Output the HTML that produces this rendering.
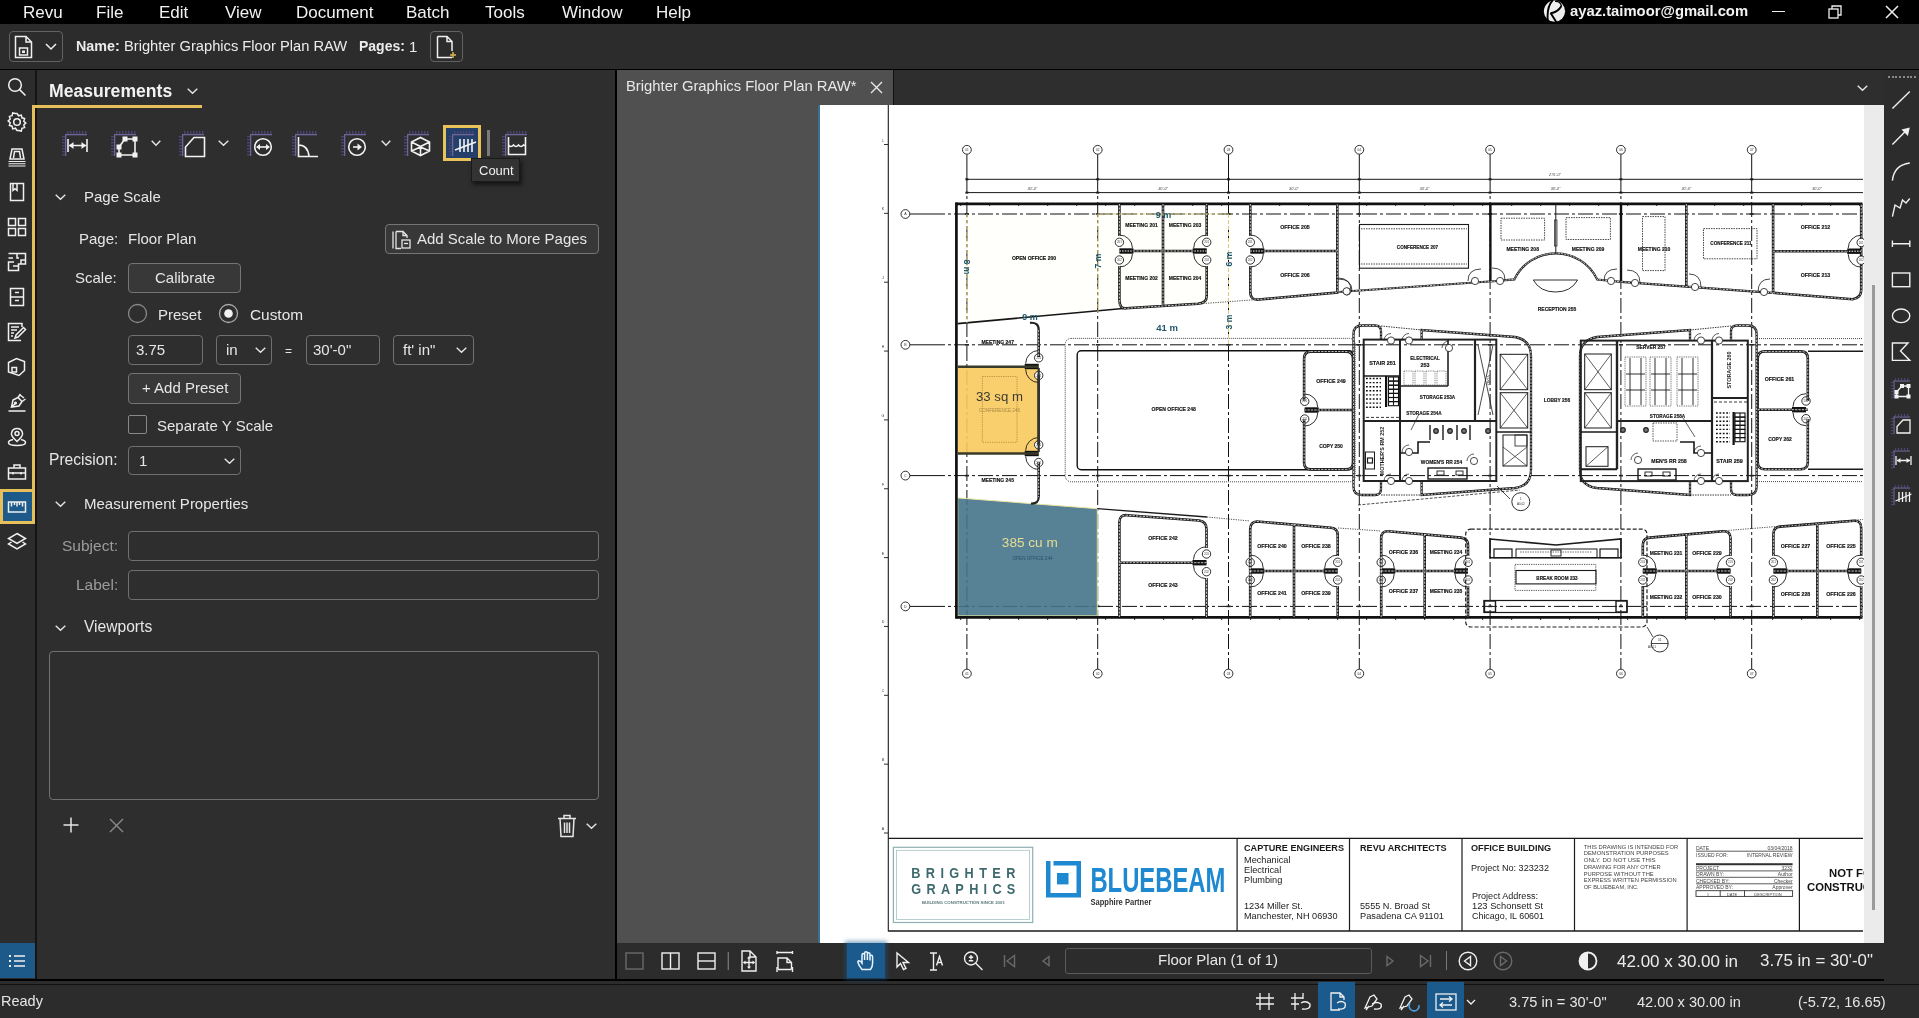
<!DOCTYPE html>
<html><head><meta charset="utf-8">
<style>
*{margin:0;padding:0;box-sizing:border-box}
html,body{width:1919px;height:1018px;overflow:hidden;-webkit-font-smoothing:antialiased;background:#2d2d2d;font-family:"Liberation Sans",sans-serif;color:#e8e8e8}
.a{position:absolute}
.t{position:absolute;white-space:nowrap;line-height:1;will-change:transform}
svg{position:absolute;overflow:visible}
.ic{fill:none;stroke:#f0f0f0;stroke-width:1.5}
.btn{position:absolute;border:1.2px solid #757575;border-radius:4px;background:#383838}
.inp{position:absolute;border:1.2px solid #707070;border-radius:4px;background:#2e2e2e}
</style></head><body>

<div class="a" style="left:0px;top:0px;width:1919px;height:24px;background:#000;"></div>
<div class="a" style="left:0px;top:24px;width:1919px;height:45px;background:#2c2c2c;"></div>
<div class="a" style="left:0px;top:68.8px;width:1919px;height:1.4px;background:#000;"></div>
<div class="a" style="left:0px;top:70px;width:35px;height:913px;background:#2c2c2c;"></div>
<div class="a" style="left:35px;top:70px;width:1.5px;height:913px;background:#141414;"></div>
<div class="a" style="left:36.5px;top:70px;width:578.5px;height:908px;background:#2e2e2e;"></div>
<div class="a" style="left:615px;top:70px;width:2px;height:913px;background:#000;"></div>
<div class="a" style="left:617px;top:70px;width:1267px;height:35px;background:#2e2e2e;"></div>
<div class="a" style="left:617px;top:70px;width:276px;height:35px;background:#505050;"></div>
<div class="a" style="left:893px;top:70px;width:1px;height:35px;background:#111;"></div>
<div class="a" style="left:617px;top:105px;width:1267px;height:838px;background:#505050;"></div>
<div class="a" style="left:818px;top:105px;width:2px;height:838px;background:#3b6f90;"></div>
<div class="a" style="left:820px;top:105px;width:1044px;height:838px;background:#fff;"></div>
<div class="a" style="left:1864px;top:105px;width:20px;height:838px;background:#ebebeb;"></div>
<div class="a" style="left:1884px;top:70px;width:35px;height:913px;background:#2c2c2c;"></div>
<div class="a" style="left:617px;top:943px;width:1267px;height:35.6px;background:#2c2c2c;"></div>
<div class="a" style="left:0px;top:978.6px;width:1884px;height:2.8px;background:#000;"></div>
<div class="a" style="left:0px;top:981.4px;width:1919px;height:2.4px;background:#2c2c2c;"></div>
<div class="a" style="left:0px;top:983.8px;width:1919px;height:1.4px;background:#111;"></div>
<div class="a" style="left:0px;top:985.2px;width:1919px;height:33px;background:#2c2c2c;"></div>
<div style="color:#f2f2f2;font-size:17px">
<div class="t" style="left:23px;top:4px">Revu</div>
<div class="t" style="left:96px;top:4px">File</div>
<div class="t" style="left:159px;top:4px">Edit</div>
<div class="t" style="left:225px;top:4px">View</div>
<div class="t" style="left:296px;top:4px">Document</div>
<div class="t" style="left:406px;top:4px">Batch</div>
<div class="t" style="left:485px;top:4px">Tools</div>
<div class="t" style="left:562px;top:4px">Window</div>
<div class="t" style="left:656px;top:4px">Help</div>
<div class="t" style="left:1570px;top:4px;font-weight:bold;font-size:14.8px">ayaz.taimoor@gmail.com</div></div>
<svg style="left:1538px;top:0" width="40" height="24"><circle cx="16.5" cy="11.2" r="10.6" fill="#eee"/><path d="M14.8 0 Q8.5 7 9.8 20" stroke="#000" stroke-width="1.9" fill="none"/><path d="M12.5 13.2 Q19.5 12.5 23.5 6" stroke="#000" stroke-width="1.9" fill="none"/><path d="M12.6 13 L18.6 22.5" stroke="#000" stroke-width="1.9"/><path d="M23.5 6 Q22 1 17 1.5" stroke="#000" stroke-width="1.2" fill="none"/></svg>
<div class="a" style="left:1772px;top:11px;width:13px;height:1.2px;background:#eee;"></div>
<svg style="left:1828px;top:5px" width="14" height="14"><rect x="1" y="4" width="9" height="9" fill="none" stroke="#eee" stroke-width="1.3"/><path d="M4 4V1H13V10H10" fill="none" stroke="#eee" stroke-width="1.3"/></svg>
<svg style="left:1885px;top:5px" width="14" height="14"><path d="M1 1L13 13M13 1L1 13" stroke="#eee" stroke-width="1.5"/></svg>
<div class="a" style="left:9px;top:31px;width:54px;height:31px;border:1.5px solid #626262;border-radius:4px"></div>
<svg style="left:14px;top:35px" width="20" height="24" viewBox="0 0 20 24"><path d="M1.5 1.5H12L17.5 7V22.5H1.5Z M12 1.5V7H17.5" class="ic" stroke-width="1.4"/><rect x="5.5" y="13" width="8" height="7" class="ic" stroke-width="1.3"/><rect x="8" y="15.5" width="3" height="2.5" fill="#f0f0f0"/></svg>
<svg style="left:45px;top:43px" width="12" height="8"><path d="M1 1L6 6L11 1" class="ic" stroke-width="1.4"/></svg>
<div class="t" style="left:76px;top:39px;font-size:14.3px;font-weight:bold;color:#ececec">Name:</div>
<div class="t" style="left:124px;top:39px;font-size:14.7px;color:#ececec">Brighter Graphics Floor Plan RAW</div>
<div class="t" style="left:359px;top:39px;font-size:14px;font-weight:bold;color:#ececec">Pages:</div>
<div class="t" style="left:409px;top:39px;font-size:15px;color:#ececec">1</div>
<div class="a" style="left:430px;top:31px;width:33px;height:31px;border:1.5px solid #626262;border-radius:4px"></div>
<svg style="left:436px;top:35px" width="22" height="24" viewBox="0 0 22 24"><path d="M1.5 1.5H11L16 6.5V16 M16 22.5H1.5V1.5 M11 1.5V6.5H16" class="ic" stroke-width="1.4"/><path d="M17 17V23M14 20H20" stroke="#d9b650" stroke-width="1.5"/></svg>
<svg style="left:7.0px;top:77.0px" width="20" height="20" viewBox="0 0 20 20" class="ic" stroke-width="1.3"><circle cx="8" cy="8" r="6.3"/><path d="M12.6 12.6L18.5 18.5"/></svg>
<svg style="left:7.0px;top:112.0px" width="20" height="20" viewBox="0 0 20 20" class="ic" stroke-width="1.3"><path d="M10 1.5l1.6 2.3 2.7-.7.6 2.7 2.7.8-.8 2.7 2 1.8-2 1.8.8 2.7-2.7.8-.6 2.7-2.7-.7L10 18.5l-1.6-2.3-2.7.7-.6-2.7-2.7-.8.8-2.7-2-1.8 2-1.8-.8-2.7 2.7-.8.6-2.7 2.7.7Z"/><circle cx="10" cy="10" r="3.3"/></svg>
<svg style="left:7.0px;top:147.0px" width="20" height="20" viewBox="0 0 20 20" class="ic" stroke-width="1.3"><path d="M3 12L5 2H15L17 12Z M6.5 11L7.5 4.5H12.5L13.5 11"/><path d="M1.5 14.5H18.5M1.5 16.8H18.5M1.5 19H18.5" stroke-width="1.1"/></svg>
<svg style="left:7.0px;top:182.0px" width="20" height="20" viewBox="0 0 20 20" class="ic" stroke-width="1.3"><path d="M3.5 1.5H16.5V18.5H3.5Z M6 1.5V8.5L8 6.8L10 8.5V1.5"/></svg>
<svg style="left:7.0px;top:217.0px" width="20" height="20" viewBox="0 0 20 20" class="ic" stroke-width="1.3"><rect x="1.5" y="1.5" width="7" height="7"/><rect x="11.5" y="1.5" width="7" height="7"/><rect x="1.5" y="11.5" width="7" height="7"/><rect x="11.5" y="11.5" width="7" height="7"/></svg>
<svg style="left:7.0px;top:252.0px" width="20" height="20" viewBox="0 0 20 20" class="ic" stroke-width="1.3"><path d="M1.5 1.5H18.5V12H11.5V18.5H1.5V10H7 M1.5 6H6 M10 1.5V6H12 M14 12V8H18.5 M6 14H11.5"/></svg>
<svg style="left:7.0px;top:287.0px" width="20" height="20" viewBox="0 0 20 20" class="ic" stroke-width="1.3"><rect x="3.5" y="1.5" width="13" height="17"/><path d="M3.5 10H16.5 M8 5.5H12 M8 13.5H12" /></svg>
<svg style="left:7.0px;top:322.0px" width="20" height="20" viewBox="0 0 20 20" class="ic" stroke-width="1.3"><path d="M14 18.5H1.5V1.5H15V5 M4 5H12 M4 8H10 M4 11H7 M4 14H6"/><path d="M8 16L9 13L16.5 5.5L18.5 7.5L11 15Z"/></svg>
<svg style="left:7.0px;top:357.0px" width="20" height="20" viewBox="0 0 20 20" class="ic" stroke-width="1.3"><path d="M1.5 5.5L9.5 1.5L17.5 4.5V13.5L12 18.5L1.5 15Z"/><rect x="5" y="10.5" width="4.5" height="4.5"/></svg>
<svg style="left:7.0px;top:392.0px" width="20" height="20" viewBox="0 0 20 20" class="ic" stroke-width="1.3"><path d="M1.5 19H18.5"/><path d="M4.5 15L6 8L11 5.5L15 9.5L12 14Z M4.5 15L9 11 M11 5.5L13.5 2 M15 9.5L18.5 7 M13 3L17 6"/><circle cx="8.5" cy="11" r="0.8" fill="#f0f0f0"/></svg>
<svg style="left:7.0px;top:427.0px" width="20" height="20" viewBox="0 0 20 20" class="ic" stroke-width="1.3"><path d="M10 14.5Q3.5 8.5 4.5 6Q5.5 1.5 10 1.5Q14.5 1.5 15.5 6Q16.5 8.5 10 14.5Z"/><circle cx="10" cy="6.5" r="2"/><path d="M6 12.5Q1.5 13.5 1.5 15.5Q1.5 18.5 10 18.5Q18.5 18.5 18.5 15.5Q18.5 13.5 14 12.5"/></svg>
<svg style="left:7.0px;top:462.0px" width="20" height="20" viewBox="0 0 20 20" class="ic" stroke-width="1.3"><rect x="1.5" y="6" width="17" height="11"/><path d="M7 6V3H13V6 M1.5 11H18.5"/><path d="M6 10V12.5M14 10V12.5"/></svg>
<div class="a" style="left:0;top:489px;width:35px;height:35px;background:#1d5a8a;border:3px solid #e6bf5a"></div>
<svg style="left:7.0px;top:497.0px" width="20" height="20" viewBox="0 0 20 20" class="ic" stroke-width="1.3"><rect x="1.5" y="5" width="17" height="10"/><path d="M4.5 5V9.5M7.5 5V8M10 5V9.5M12.5 5V8M15.5 5V9.5"/></svg>
<svg style="left:7.0px;top:532.0px" width="20" height="20" viewBox="0 0 20 20" class="ic" stroke-width="1.3"><path d="M10 1.5L18.5 6.5L10 11.5L1.5 6.5Z"/><path d="M4.5 10L1.5 12L10 17L18.5 12L15.5 10"/></svg>
<div class="a" style="left:32px;top:105px;width:3px;height:387px;background:#e6bf5a;"></div>
<div class="a" style="left:32px;top:105px;width:170px;height:3px;background:#e6bf5a;"></div>
<div class="a" style="left:0px;top:943px;width:35px;height:35px;background:#1d5a8a;"></div>
<svg style="left:7.0px;top:951.0px" width="20" height="20" viewBox="0 0 20 20" class="ic" stroke-width="1.3"><path d="M7 5H18M7 10H18M7 15H18" /><path d="M2 5H4M2 10H4M2 15H4" stroke-width="2"/></svg>
<div class="t" style="left:49px;top:82.7px;font-size:17.6px;color:#f2f2f2;font-weight:bold">Measurements</div>
<svg style="left:187px;top:88px" width="11" height="6"><path d="M0.7 0.7L5.5 5.3L10.3 0.7" fill="none" stroke="#e6e6e6" stroke-width="1.4"/></svg>
<div class="a" style="left:443px;top:125px;width:38px;height:36px;background:#24406a;border:3px solid #e8c35a"></div>
<svg style="left:62px;top:131px" width="25" height="25"><rect x="5" y="0" width="1.4" height="3" fill="#4a4470"/><rect x="8" y="0" width="1.4" height="3" fill="#4a4470"/><rect x="11" y="0" width="1.4" height="3" fill="#4a4470"/><rect x="14" y="0" width="1.4" height="3" fill="#4a4470"/><rect x="17" y="0" width="1.4" height="3" fill="#4a4470"/><rect x="20" y="0" width="1.4" height="3" fill="#4a4470"/><rect x="23" y="0" width="1.4" height="3" fill="#4a4470"/><rect x="0" y="5" width="3" height="1.4" fill="#4a4470"/><rect x="0" y="8" width="3" height="1.4" fill="#4a4470"/><rect x="0" y="11" width="3" height="1.4" fill="#4a4470"/><rect x="0" y="14" width="3" height="1.4" fill="#4a4470"/><rect x="0" y="17" width="3" height="1.4" fill="#4a4470"/><rect x="0" y="20" width="3" height="1.4" fill="#4a4470"/><rect x="0" y="23" width="3" height="1.4" fill="#4a4470"/><rect x="3" y="3" width="22" height="1.3" fill="#6c6496"/><rect x="3" y="3" width="1.3" height="22" fill="#6c6496"/></svg>
<svg style="left:111px;top:131px" width="25" height="25"><rect x="5" y="0" width="1.4" height="3" fill="#4a4470"/><rect x="8" y="0" width="1.4" height="3" fill="#4a4470"/><rect x="11" y="0" width="1.4" height="3" fill="#4a4470"/><rect x="14" y="0" width="1.4" height="3" fill="#4a4470"/><rect x="17" y="0" width="1.4" height="3" fill="#4a4470"/><rect x="20" y="0" width="1.4" height="3" fill="#4a4470"/><rect x="23" y="0" width="1.4" height="3" fill="#4a4470"/><rect x="0" y="5" width="3" height="1.4" fill="#4a4470"/><rect x="0" y="8" width="3" height="1.4" fill="#4a4470"/><rect x="0" y="11" width="3" height="1.4" fill="#4a4470"/><rect x="0" y="14" width="3" height="1.4" fill="#4a4470"/><rect x="0" y="17" width="3" height="1.4" fill="#4a4470"/><rect x="0" y="20" width="3" height="1.4" fill="#4a4470"/><rect x="0" y="23" width="3" height="1.4" fill="#4a4470"/><rect x="3" y="3" width="22" height="1.3" fill="#6c6496"/><rect x="3" y="3" width="1.3" height="22" fill="#6c6496"/></svg>
<svg style="left:179px;top:131px" width="25" height="25"><rect x="5" y="0" width="1.4" height="3" fill="#4a4470"/><rect x="8" y="0" width="1.4" height="3" fill="#4a4470"/><rect x="11" y="0" width="1.4" height="3" fill="#4a4470"/><rect x="14" y="0" width="1.4" height="3" fill="#4a4470"/><rect x="17" y="0" width="1.4" height="3" fill="#4a4470"/><rect x="20" y="0" width="1.4" height="3" fill="#4a4470"/><rect x="23" y="0" width="1.4" height="3" fill="#4a4470"/><rect x="0" y="5" width="3" height="1.4" fill="#4a4470"/><rect x="0" y="8" width="3" height="1.4" fill="#4a4470"/><rect x="0" y="11" width="3" height="1.4" fill="#4a4470"/><rect x="0" y="14" width="3" height="1.4" fill="#4a4470"/><rect x="0" y="17" width="3" height="1.4" fill="#4a4470"/><rect x="0" y="20" width="3" height="1.4" fill="#4a4470"/><rect x="0" y="23" width="3" height="1.4" fill="#4a4470"/><rect x="3" y="3" width="22" height="1.3" fill="#6c6496"/><rect x="3" y="3" width="1.3" height="22" fill="#6c6496"/></svg>
<svg style="left:247px;top:131px" width="25" height="25"><rect x="5" y="0" width="1.4" height="3" fill="#4a4470"/><rect x="8" y="0" width="1.4" height="3" fill="#4a4470"/><rect x="11" y="0" width="1.4" height="3" fill="#4a4470"/><rect x="14" y="0" width="1.4" height="3" fill="#4a4470"/><rect x="17" y="0" width="1.4" height="3" fill="#4a4470"/><rect x="20" y="0" width="1.4" height="3" fill="#4a4470"/><rect x="23" y="0" width="1.4" height="3" fill="#4a4470"/><rect x="0" y="5" width="3" height="1.4" fill="#4a4470"/><rect x="0" y="8" width="3" height="1.4" fill="#4a4470"/><rect x="0" y="11" width="3" height="1.4" fill="#4a4470"/><rect x="0" y="14" width="3" height="1.4" fill="#4a4470"/><rect x="0" y="17" width="3" height="1.4" fill="#4a4470"/><rect x="0" y="20" width="3" height="1.4" fill="#4a4470"/><rect x="0" y="23" width="3" height="1.4" fill="#4a4470"/><rect x="3" y="3" width="22" height="1.3" fill="#6c6496"/><rect x="3" y="3" width="1.3" height="22" fill="#6c6496"/></svg>
<svg style="left:292px;top:131px" width="25" height="25"><rect x="5" y="0" width="1.4" height="3" fill="#4a4470"/><rect x="8" y="0" width="1.4" height="3" fill="#4a4470"/><rect x="11" y="0" width="1.4" height="3" fill="#4a4470"/><rect x="14" y="0" width="1.4" height="3" fill="#4a4470"/><rect x="17" y="0" width="1.4" height="3" fill="#4a4470"/><rect x="20" y="0" width="1.4" height="3" fill="#4a4470"/><rect x="23" y="0" width="1.4" height="3" fill="#4a4470"/><rect x="0" y="5" width="3" height="1.4" fill="#4a4470"/><rect x="0" y="8" width="3" height="1.4" fill="#4a4470"/><rect x="0" y="11" width="3" height="1.4" fill="#4a4470"/><rect x="0" y="14" width="3" height="1.4" fill="#4a4470"/><rect x="0" y="17" width="3" height="1.4" fill="#4a4470"/><rect x="0" y="20" width="3" height="1.4" fill="#4a4470"/><rect x="0" y="23" width="3" height="1.4" fill="#4a4470"/><rect x="3" y="3" width="22" height="1.3" fill="#6c6496"/><rect x="3" y="3" width="1.3" height="22" fill="#6c6496"/></svg>
<svg style="left:341px;top:131px" width="25" height="25"><rect x="5" y="0" width="1.4" height="3" fill="#4a4470"/><rect x="8" y="0" width="1.4" height="3" fill="#4a4470"/><rect x="11" y="0" width="1.4" height="3" fill="#4a4470"/><rect x="14" y="0" width="1.4" height="3" fill="#4a4470"/><rect x="17" y="0" width="1.4" height="3" fill="#4a4470"/><rect x="20" y="0" width="1.4" height="3" fill="#4a4470"/><rect x="23" y="0" width="1.4" height="3" fill="#4a4470"/><rect x="0" y="5" width="3" height="1.4" fill="#4a4470"/><rect x="0" y="8" width="3" height="1.4" fill="#4a4470"/><rect x="0" y="11" width="3" height="1.4" fill="#4a4470"/><rect x="0" y="14" width="3" height="1.4" fill="#4a4470"/><rect x="0" y="17" width="3" height="1.4" fill="#4a4470"/><rect x="0" y="20" width="3" height="1.4" fill="#4a4470"/><rect x="0" y="23" width="3" height="1.4" fill="#4a4470"/><rect x="3" y="3" width="22" height="1.3" fill="#6c6496"/><rect x="3" y="3" width="1.3" height="22" fill="#6c6496"/></svg>
<svg style="left:404px;top:131px" width="25" height="25"><rect x="5" y="0" width="1.4" height="3" fill="#4a4470"/><rect x="8" y="0" width="1.4" height="3" fill="#4a4470"/><rect x="11" y="0" width="1.4" height="3" fill="#4a4470"/><rect x="14" y="0" width="1.4" height="3" fill="#4a4470"/><rect x="17" y="0" width="1.4" height="3" fill="#4a4470"/><rect x="20" y="0" width="1.4" height="3" fill="#4a4470"/><rect x="23" y="0" width="1.4" height="3" fill="#4a4470"/><rect x="0" y="5" width="3" height="1.4" fill="#4a4470"/><rect x="0" y="8" width="3" height="1.4" fill="#4a4470"/><rect x="0" y="11" width="3" height="1.4" fill="#4a4470"/><rect x="0" y="14" width="3" height="1.4" fill="#4a4470"/><rect x="0" y="17" width="3" height="1.4" fill="#4a4470"/><rect x="0" y="20" width="3" height="1.4" fill="#4a4470"/><rect x="0" y="23" width="3" height="1.4" fill="#4a4470"/><rect x="3" y="3" width="22" height="1.3" fill="#6c6496"/><rect x="3" y="3" width="1.3" height="22" fill="#6c6496"/></svg>
<svg style="left:449px;top:131px" width="25" height="25"><rect x="5" y="0" width="1.4" height="3" fill="#4a4470"/><rect x="8" y="0" width="1.4" height="3" fill="#4a4470"/><rect x="11" y="0" width="1.4" height="3" fill="#4a4470"/><rect x="14" y="0" width="1.4" height="3" fill="#4a4470"/><rect x="17" y="0" width="1.4" height="3" fill="#4a4470"/><rect x="20" y="0" width="1.4" height="3" fill="#4a4470"/><rect x="23" y="0" width="1.4" height="3" fill="#4a4470"/><rect x="0" y="5" width="3" height="1.4" fill="#4a4470"/><rect x="0" y="8" width="3" height="1.4" fill="#4a4470"/><rect x="0" y="11" width="3" height="1.4" fill="#4a4470"/><rect x="0" y="14" width="3" height="1.4" fill="#4a4470"/><rect x="0" y="17" width="3" height="1.4" fill="#4a4470"/><rect x="0" y="20" width="3" height="1.4" fill="#4a4470"/><rect x="0" y="23" width="3" height="1.4" fill="#4a4470"/><rect x="3" y="3" width="22" height="1.3" fill="#6c6496"/><rect x="3" y="3" width="1.3" height="22" fill="#6c6496"/></svg>
<svg style="left:502px;top:131px" width="25" height="25"><rect x="5" y="0" width="1.4" height="3" fill="#4a4470"/><rect x="8" y="0" width="1.4" height="3" fill="#4a4470"/><rect x="11" y="0" width="1.4" height="3" fill="#4a4470"/><rect x="14" y="0" width="1.4" height="3" fill="#4a4470"/><rect x="17" y="0" width="1.4" height="3" fill="#4a4470"/><rect x="20" y="0" width="1.4" height="3" fill="#4a4470"/><rect x="23" y="0" width="1.4" height="3" fill="#4a4470"/><rect x="0" y="5" width="3" height="1.4" fill="#4a4470"/><rect x="0" y="8" width="3" height="1.4" fill="#4a4470"/><rect x="0" y="11" width="3" height="1.4" fill="#4a4470"/><rect x="0" y="14" width="3" height="1.4" fill="#4a4470"/><rect x="0" y="17" width="3" height="1.4" fill="#4a4470"/><rect x="0" y="20" width="3" height="1.4" fill="#4a4470"/><rect x="0" y="23" width="3" height="1.4" fill="#4a4470"/><rect x="3" y="3" width="22" height="1.3" fill="#6c6496"/><rect x="3" y="3" width="1.3" height="22" fill="#6c6496"/></svg>
<svg style="left:66px;top:138px" width="24" height="16"><path d="M2 1V14 M21 1V14 M3 7.5H20" fill="none" stroke="#f2f2f2" stroke-width="1.6"/><path d="M3 7.5L7.5 4V11Z M20 7.5L15.5 4V11Z" fill="#f2f2f2"/></svg>
<svg style="left:115px;top:135px" width="24" height="24"><path d="M4 12L10 4H20V20H4Z" fill="none" stroke="#f2f2f2" stroke-width="1.6" stroke-width="1.4"/><rect x="1.5" y="9.5" width="5" height="5" fill="#f2f2f2"/><rect x="7.5" y="1.5" width="5" height="5" fill="#f2f2f2"/><rect x="17.5" y="1.5" width="5" height="5" fill="#f2f2f2"/><rect x="17.5" y="17.5" width="5" height="5" fill="#f2f2f2"/><rect x="1.5" y="17.5" width="5" height="5" fill="#f2f2f2"/></svg>
<svg style="left:151px;top:140px" width="10" height="6"><path d="M0.7 0.7L5.0 5.3L9.3 0.7" fill="none" stroke="#e6e6e6" stroke-width="1.4"/></svg>
<svg style="left:184px;top:136px" width="22" height="22"><path d="M1.5 20.5V11L10 1.5H20.5V20.5Z" fill="none" stroke="#f2f2f2" stroke-width="1.6"/></svg>
<svg style="left:218px;top:140px" width="11" height="6"><path d="M0.7 0.7L5.5 5.3L10.3 0.7" fill="none" stroke="#e6e6e6" stroke-width="1.4"/></svg>
<svg style="left:253px;top:137px" width="20" height="20"><circle cx="10" cy="10" r="8.3" fill="none" stroke="#f2f2f2" stroke-width="1.6"/><path d="M4.5 10H15.5" fill="none" stroke="#f2f2f2" stroke-width="1.6"/><path d="M3 10L7 7V13Z M17 10L13 7V13Z" fill="#f2f2f2"/></svg>
<svg style="left:297px;top:136px" width="22" height="22"><path d="M1.5 1V20.5H21 M1.5 9Q11 9 12 20.5" fill="none" stroke="#f2f2f2" stroke-width="1.6"/></svg>
<svg style="left:347px;top:137px" width="20" height="20"><circle cx="10" cy="10" r="8.3" fill="none" stroke="#f2f2f2" stroke-width="1.6"/><path d="M6 10H12" fill="none" stroke="#f2f2f2" stroke-width="1.6" stroke-width="2"/><path d="M15 10L10.5 6.5V13.5Z" fill="#f2f2f2"/></svg>
<svg style="left:381px;top:140px" width="10" height="6"><path d="M0.7 0.7L5.0 5.3L9.3 0.7" fill="none" stroke="#e6e6e6" stroke-width="1.4"/></svg>
<svg style="left:410px;top:136px" width="21" height="21"><path d="M10.5 1.5L19.5 6V15L10.5 19.5L1.5 15V6Z M1.5 6L10.5 10.5L19.5 6 M10.5 10.5V19.5 M1.5 15L10.5 11 M19.5 15L10.5 11" fill="none" stroke="#f2f2f2" stroke-width="1.6" stroke-width="1.3"/></svg>
<svg style="left:454px;top:138px" width="24" height="16"><path d="M6 1V14 M10 1V14 M14 1V14 M18 1V14" fill="none" stroke="#f2f2f2" stroke-width="1.6" stroke-width="1.5"/><path d="M1 12L22 4" fill="none" stroke="#f2f2f2" stroke-width="1.6" stroke-width="1.5"/></svg>
<div class="a" style="left:487px;top:130px;width:2.5px;height:26px;background:#7a7a7a;"></div>
<svg style="left:507px;top:137px" width="20" height="19"><path d="M1.5 0V17.5H18.5V0 M1.5 8Q4 11 6.5 8Q9 11 11.5 8Q14 11 16.5 8Q17.5 9 18.5 8" fill="none" stroke="#f2f2f2" stroke-width="1.6" stroke-width="1.5"/></svg>
<div class="a" style="left:471px;top:158px;width:49px;height:24px;background:#333;border:1px solid #1a1a1a;box-shadow:2px 3px 4px rgba(0,0,0,.55)"></div>
<div class="t" style="left:479px;top:164.3px;font-size:13px;color:#f0f0f0;">Count</div>
<svg style="left:55px;top:194px" width="11" height="6"><path d="M0.7 0.7L5.5 5.3L10.3 0.7" fill="none" stroke="#e6e6e6" stroke-width="1.4"/></svg>
<div class="t" style="left:84px;top:189.1px;font-size:15px;color:#e6e6e6;">Page Scale</div>
<div class="t" style="left:79px;top:231.1px;font-size:15px;color:#e6e6e6;">Page:</div>
<div class="t" style="left:128px;top:231.1px;font-size:15px;color:#e6e6e6;">Floor Plan</div>
<div class="btn" style="left:385px;top:224px;width:214px;height:30px;"></div>
<svg style="left:392px;top:230px" width="20" height="20"><path d="M1 1.5V18.5 M4 1.5H11L15 5.5V8 M4 1.5V18.5H9 M11 1.5V5.5H15" fill="none" stroke="#e6e6e6" stroke-width="1.3"/><rect x="10" y="10" width="8" height="8" fill="none" stroke="#e6e6e6" stroke-width="1.3"/><path d="M12 13.5H16" stroke="#e6e6e6" stroke-width="1.3"/></svg>
<div class="t" style="left:417px;top:231.1px;font-size:15px;color:#e6e6e6;">Add Scale to More Pages</div>
<div class="t" style="left:75px;top:270.1px;font-size:15px;color:#e6e6e6;">Scale:</div>
<div class="btn" style="left:128px;top:263px;width:113px;height:30px;"></div>
<div class="t" style="left:155px;top:270.1px;font-size:15px;color:#e6e6e6;">Calibrate</div>
<svg style="left:127px;top:303px" width="22" height="22"><circle cx="10.5" cy="10.5" r="9" fill="none" stroke="#888" stroke-width="1.3"/></svg>
<div class="t" style="left:158px;top:307.1px;font-size:15px;color:#e6e6e6;">Preset</div>
<svg style="left:218px;top:303px" width="22" height="22"><circle cx="10.5" cy="10.5" r="9" fill="none" stroke="#aaa" stroke-width="1.3"/><circle cx="10.5" cy="10.5" r="4.3" fill="#f2f2f2"/></svg>
<div class="t" style="left:250px;top:307.0px;font-size:15.4px;color:#e6e6e6;">Custom</div>
<div class="inp" style="left:128px;top:335px;width:75px;height:30px;"></div>
<div class="t" style="left:136px;top:342.1px;font-size:15px;color:#e6e6e6;">3.75</div>
<div class="inp" style="left:216px;top:335px;width:56px;height:30px;"></div>
<div class="t" style="left:226px;top:342.1px;font-size:15px;color:#e6e6e6;">in</div>
<svg style="left:255px;top:347px" width="11" height="6"><path d="M0.7 0.7L5.5 5.3L10.3 0.7" fill="none" stroke="#e6e6e6" stroke-width="1.4"/></svg>
<div class="t" style="left:285px;top:345.4px;font-size:12px;color:#e6e6e6;">=</div>
<div class="inp" style="left:306px;top:335px;width:74px;height:30px;"></div>
<div class="t" style="left:313px;top:342.1px;font-size:15px;color:#e6e6e6;">30'-0"</div>
<div class="inp" style="left:393px;top:335px;width:81px;height:30px;"></div>
<div class="t" style="left:403px;top:342.1px;font-size:15px;color:#e6e6e6;">ft' in"</div>
<svg style="left:456px;top:347px" width="11" height="6"><path d="M0.7 0.7L5.5 5.3L10.3 0.7" fill="none" stroke="#e6e6e6" stroke-width="1.4"/></svg>
<div class="btn" style="left:128px;top:373px;width:113px;height:31px;"></div>
<div class="t" style="left:142px;top:380.1px;font-size:15px;color:#e6e6e6;">+ Add Preset</div>
<div class="a" style="left:128px;top:415px;width:19px;height:19px;border:1.3px solid #888;border-radius:2px"></div>
<div class="t" style="left:157px;top:418.1px;font-size:15px;color:#e6e6e6;">Separate Y Scale</div>
<div class="t" style="left:49px;top:452.0px;font-size:15.6px;color:#e6e6e6;">Precision:</div>
<div class="inp" style="left:128px;top:446px;width:113px;height:29px;"></div>
<div class="t" style="left:139px;top:453.1px;font-size:15px;color:#e6e6e6;">1</div>
<svg style="left:224px;top:458px" width="11" height="6"><path d="M0.7 0.7L5.5 5.3L10.3 0.7" fill="none" stroke="#e6e6e6" stroke-width="1.4"/></svg>
<svg style="left:55px;top:501px" width="11" height="6"><path d="M0.7 0.7L5.5 5.3L10.3 0.7" fill="none" stroke="#e6e6e6" stroke-width="1.4"/></svg>
<div class="t" style="left:84px;top:496.1px;font-size:15px;color:#e6e6e6;">Measurement Properties</div>
<div class="t" style="left:62px;top:538.0px;font-size:15.5px;color:#9c9c9c;">Subject:</div>
<div class="inp" style="left:128px;top:531px;width:471px;height:30px;"></div>
<div class="t" style="left:76px;top:577.0px;font-size:15.5px;color:#9c9c9c;">Label:</div>
<div class="inp" style="left:128px;top:570px;width:471px;height:30px;"></div>
<svg style="left:55px;top:625px" width="11" height="6"><path d="M0.7 0.7L5.5 5.3L10.3 0.7" fill="none" stroke="#e6e6e6" stroke-width="1.4"/></svg>
<div class="t" style="left:84px;top:619.0px;font-size:15.6px;color:#e6e6e6;">Viewports</div>
<div class="inp" style="left:49px;top:651px;width:550px;height:149px;"></div>
<svg style="left:63px;top:817px" width="16" height="16"><path d="M8 0.5V15.5M0.5 8H15.5" stroke="#e6e6e6" stroke-width="1.5"/></svg>
<svg style="left:109px;top:818px" width="15" height="15"><path d="M1 1L14 14M14 1L1 14" stroke="#8a8a8a" stroke-width="1.4"/></svg>
<svg style="left:557px;top:814px" width="20" height="24"><path d="M1 4.5H19 M7 4.5V1.5H13V4.5 M3 4.5L4 22.5H16L17 4.5 M7.5 8.5V19 M10 8.5V19 M12.5 8.5V19" fill="none" stroke="#e6e6e6" stroke-width="1.5"/></svg>
<svg style="left:586px;top:823px" width="11" height="6"><path d="M0.7 0.7L5.5 5.3L10.3 0.7" fill="none" stroke="#e6e6e6" stroke-width="1.4"/></svg>
<div class="t" style="left:626px;top:79.1px;font-size:14.8px;color:#e8e8e8;">Brighter Graphics Floor Plan RAW*</div>
<svg style="left:870px;top:81px" width="13" height="13"><path d="M1 1L12 12M12 1L1 12" stroke="#e8e8e8" stroke-width="1.4"/></svg>
<svg style="left:1857px;top:85px" width="11" height="6"><path d="M0.7 0.7L5.5 5.3L10.3 0.7" fill="none" stroke="#e6e6e6" stroke-width="1.4"/></svg>
<svg style="left:0;top:0" width="1919" height="1018"><defs><clipPath id="pg"><rect x="820" y="105" width="1044" height="837"/></clipPath></defs><g clip-path="url(#pg)" font-family="Liberation Sans, sans-serif">
<line x1="888.3" y1="105" x2="888.3" y2="931.5" stroke="#1a1a1a" stroke-width="1.1" stroke-linecap="butt"/>
<line x1="884" y1="144.5" x2="888.3" y2="144.5" stroke="#1a1a1a" stroke-width="0.9" stroke-linecap="butt"/>
<text x="883" y="141.5" font-size="3.6" fill="#333" text-anchor="middle" font-weight="normal" >L</text>
<line x1="884" y1="213.35" x2="888.3" y2="213.35" stroke="#1a1a1a" stroke-width="0.9" stroke-linecap="butt"/>
<text x="883" y="210.35" font-size="3.6" fill="#333" text-anchor="middle" font-weight="normal" >K</text>
<line x1="884" y1="282.2" x2="888.3" y2="282.2" stroke="#1a1a1a" stroke-width="0.9" stroke-linecap="butt"/>
<text x="883" y="279.2" font-size="3.6" fill="#333" text-anchor="middle" font-weight="normal" >J</text>
<line x1="884" y1="351.04999999999995" x2="888.3" y2="351.04999999999995" stroke="#1a1a1a" stroke-width="0.9" stroke-linecap="butt"/>
<text x="883" y="348.04999999999995" font-size="3.6" fill="#333" text-anchor="middle" font-weight="normal" >H</text>
<line x1="884" y1="419.9" x2="888.3" y2="419.9" stroke="#1a1a1a" stroke-width="0.9" stroke-linecap="butt"/>
<text x="883" y="416.9" font-size="3.6" fill="#333" text-anchor="middle" font-weight="normal" >G</text>
<line x1="884" y1="488.75" x2="888.3" y2="488.75" stroke="#1a1a1a" stroke-width="0.9" stroke-linecap="butt"/>
<text x="883" y="485.75" font-size="3.6" fill="#333" text-anchor="middle" font-weight="normal" >F</text>
<line x1="884" y1="557.5999999999999" x2="888.3" y2="557.5999999999999" stroke="#1a1a1a" stroke-width="0.9" stroke-linecap="butt"/>
<text x="883" y="554.5999999999999" font-size="3.6" fill="#333" text-anchor="middle" font-weight="normal" >E</text>
<line x1="884" y1="626.4499999999999" x2="888.3" y2="626.4499999999999" stroke="#1a1a1a" stroke-width="0.9" stroke-linecap="butt"/>
<text x="883" y="623.4499999999999" font-size="3.6" fill="#333" text-anchor="middle" font-weight="normal" >D</text>
<line x1="884" y1="695.3" x2="888.3" y2="695.3" stroke="#1a1a1a" stroke-width="0.9" stroke-linecap="butt"/>
<text x="883" y="692.3" font-size="3.6" fill="#333" text-anchor="middle" font-weight="normal" >C</text>
<line x1="884" y1="764.15" x2="888.3" y2="764.15" stroke="#1a1a1a" stroke-width="0.9" stroke-linecap="butt"/>
<text x="883" y="761.15" font-size="3.6" fill="#333" text-anchor="middle" font-weight="normal" >B</text>
<line x1="884" y1="833.0" x2="888.3" y2="833.0" stroke="#1a1a1a" stroke-width="0.9" stroke-linecap="butt"/>
<text x="883" y="830.0" font-size="3.6" fill="#333" text-anchor="middle" font-weight="normal" >A</text>
<path d="M966.9 214 L1228.5 214 L1228.5 306 L1201 303.7 L1123 308.5 L966.9 323" stroke="#1a1a1a" stroke-width="0" fill="#fffffb" />
<line x1="966.9" y1="154.2" x2="966.9" y2="178" stroke="#111" stroke-width="1.0" stroke-linecap="butt"/>
<line x1="966.9" y1="178" x2="966.9" y2="669.2" stroke="#111" stroke-width="1.0" stroke-dasharray="15 3 3 3" stroke-linecap="butt"/>
<circle cx="966.9" cy="149.8" r="4.4" stroke="#1a1a1a" stroke-width="0.9" fill="#fff"/>
<circle cx="966.9" cy="673.6" r="4.4" stroke="#1a1a1a" stroke-width="0.9" fill="#fff"/>
<line x1="1097.7" y1="154.2" x2="1097.7" y2="178" stroke="#111" stroke-width="1.0" stroke-linecap="butt"/>
<line x1="1097.7" y1="178" x2="1097.7" y2="669.2" stroke="#111" stroke-width="1.0" stroke-dasharray="15 3 3 3" stroke-linecap="butt"/>
<circle cx="1097.7" cy="149.8" r="4.4" stroke="#1a1a1a" stroke-width="0.9" fill="#fff"/>
<circle cx="1097.7" cy="673.6" r="4.4" stroke="#1a1a1a" stroke-width="0.9" fill="#fff"/>
<line x1="1228.5" y1="154.2" x2="1228.5" y2="178" stroke="#111" stroke-width="1.0" stroke-linecap="butt"/>
<line x1="1228.5" y1="178" x2="1228.5" y2="669.2" stroke="#111" stroke-width="1.0" stroke-dasharray="15 3 3 3" stroke-linecap="butt"/>
<circle cx="1228.5" cy="149.8" r="4.4" stroke="#1a1a1a" stroke-width="0.9" fill="#fff"/>
<circle cx="1228.5" cy="673.6" r="4.4" stroke="#1a1a1a" stroke-width="0.9" fill="#fff"/>
<line x1="1359.3" y1="154.2" x2="1359.3" y2="178" stroke="#111" stroke-width="1.0" stroke-linecap="butt"/>
<line x1="1359.3" y1="178" x2="1359.3" y2="669.2" stroke="#111" stroke-width="1.0" stroke-dasharray="15 3 3 3" stroke-linecap="butt"/>
<circle cx="1359.3" cy="149.8" r="4.4" stroke="#1a1a1a" stroke-width="0.9" fill="#fff"/>
<circle cx="1359.3" cy="673.6" r="4.4" stroke="#1a1a1a" stroke-width="0.9" fill="#fff"/>
<line x1="1490.1" y1="154.2" x2="1490.1" y2="178" stroke="#111" stroke-width="1.0" stroke-linecap="butt"/>
<line x1="1490.1" y1="178" x2="1490.1" y2="669.2" stroke="#111" stroke-width="1.0" stroke-dasharray="15 3 3 3" stroke-linecap="butt"/>
<circle cx="1490.1" cy="149.8" r="4.4" stroke="#1a1a1a" stroke-width="0.9" fill="#fff"/>
<circle cx="1490.1" cy="673.6" r="4.4" stroke="#1a1a1a" stroke-width="0.9" fill="#fff"/>
<line x1="1620.9" y1="154.2" x2="1620.9" y2="178" stroke="#111" stroke-width="1.0" stroke-linecap="butt"/>
<line x1="1620.9" y1="178" x2="1620.9" y2="669.2" stroke="#111" stroke-width="1.0" stroke-dasharray="15 3 3 3" stroke-linecap="butt"/>
<circle cx="1620.9" cy="149.8" r="4.4" stroke="#1a1a1a" stroke-width="0.9" fill="#fff"/>
<circle cx="1620.9" cy="673.6" r="4.4" stroke="#1a1a1a" stroke-width="0.9" fill="#fff"/>
<line x1="1751.7" y1="154.2" x2="1751.7" y2="178" stroke="#111" stroke-width="1.0" stroke-linecap="butt"/>
<line x1="1751.7" y1="178" x2="1751.7" y2="669.2" stroke="#111" stroke-width="1.0" stroke-dasharray="15 3 3 3" stroke-linecap="butt"/>
<circle cx="1751.7" cy="149.8" r="4.4" stroke="#1a1a1a" stroke-width="0.9" fill="#fff"/>
<circle cx="1751.7" cy="673.6" r="4.4" stroke="#1a1a1a" stroke-width="0.9" fill="#fff"/>
<line x1="909.8" y1="214.0" x2="930" y2="214.0" stroke="#111" stroke-width="1.0" stroke-linecap="butt"/>
<line x1="930" y1="214.0" x2="1863" y2="214.0" stroke="#111" stroke-width="1.0" stroke-dasharray="15 3 3 3" stroke-linecap="butt"/>
<circle cx="905.4" cy="214.0" r="4.4" stroke="#1a1a1a" stroke-width="0.9" fill="#fff"/>
<line x1="909.8" y1="344.8" x2="930" y2="344.8" stroke="#111" stroke-width="1.0" stroke-linecap="butt"/>
<line x1="930" y1="344.8" x2="1863" y2="344.8" stroke="#111" stroke-width="1.0" stroke-dasharray="15 3 3 3" stroke-linecap="butt"/>
<circle cx="905.4" cy="344.8" r="4.4" stroke="#1a1a1a" stroke-width="0.9" fill="#fff"/>
<line x1="909.8" y1="475.6" x2="930" y2="475.6" stroke="#111" stroke-width="1.0" stroke-linecap="butt"/>
<line x1="930" y1="475.6" x2="1863" y2="475.6" stroke="#111" stroke-width="1.0" stroke-dasharray="15 3 3 3" stroke-linecap="butt"/>
<circle cx="905.4" cy="475.6" r="4.4" stroke="#1a1a1a" stroke-width="0.9" fill="#fff"/>
<line x1="909.8" y1="606.4000000000001" x2="930" y2="606.4000000000001" stroke="#111" stroke-width="1.0" stroke-linecap="butt"/>
<line x1="930" y1="606.4000000000001" x2="1863" y2="606.4000000000001" stroke="#111" stroke-width="1.0" stroke-dasharray="15 3 3 3" stroke-linecap="butt"/>
<circle cx="905.4" cy="606.4000000000001" r="4.4" stroke="#1a1a1a" stroke-width="0.9" fill="#fff"/>
<text x="966.9" y="151.2" font-size="3.2" fill="#333" text-anchor="middle" font-weight="normal" >01</text>
<text x="966.9" y="675.0" font-size="3.2" fill="#333" text-anchor="middle" font-weight="normal" >01</text>
<text x="1097.7" y="151.2" font-size="3.2" fill="#333" text-anchor="middle" font-weight="normal" >02</text>
<text x="1097.7" y="675.0" font-size="3.2" fill="#333" text-anchor="middle" font-weight="normal" >02</text>
<text x="1228.5" y="151.2" font-size="3.2" fill="#333" text-anchor="middle" font-weight="normal" >03</text>
<text x="1228.5" y="675.0" font-size="3.2" fill="#333" text-anchor="middle" font-weight="normal" >03</text>
<text x="1359.3" y="151.2" font-size="3.2" fill="#333" text-anchor="middle" font-weight="normal" >04</text>
<text x="1359.3" y="675.0" font-size="3.2" fill="#333" text-anchor="middle" font-weight="normal" >04</text>
<text x="1490.1" y="151.2" font-size="3.2" fill="#333" text-anchor="middle" font-weight="normal" >05</text>
<text x="1490.1" y="675.0" font-size="3.2" fill="#333" text-anchor="middle" font-weight="normal" >05</text>
<text x="1620.9" y="151.2" font-size="3.2" fill="#333" text-anchor="middle" font-weight="normal" >06</text>
<text x="1620.9" y="675.0" font-size="3.2" fill="#333" text-anchor="middle" font-weight="normal" >06</text>
<text x="1751.7" y="151.2" font-size="3.2" fill="#333" text-anchor="middle" font-weight="normal" >07</text>
<text x="1751.7" y="675.0" font-size="3.2" fill="#333" text-anchor="middle" font-weight="normal" >07</text>
<text x="905.4" y="215.3" font-size="3.6" fill="#333" text-anchor="middle" font-weight="normal" >A</text>
<text x="905.4" y="346.1" font-size="3.6" fill="#333" text-anchor="middle" font-weight="normal" >B</text>
<text x="905.4" y="476.90000000000003" font-size="3.6" fill="#333" text-anchor="middle" font-weight="normal" >C</text>
<text x="905.4" y="607.7" font-size="3.6" fill="#333" text-anchor="middle" font-weight="normal" >D</text>
<line x1="964.9" y1="214.0" x2="968.9" y2="214.0" stroke="#222" stroke-width="1.6" stroke-linecap="butt"/>
<line x1="964.9" y1="344.8" x2="968.9" y2="344.8" stroke="#222" stroke-width="1.6" stroke-linecap="butt"/>
<line x1="964.9" y1="475.6" x2="968.9" y2="475.6" stroke="#222" stroke-width="1.6" stroke-linecap="butt"/>
<line x1="964.9" y1="606.4000000000001" x2="968.9" y2="606.4000000000001" stroke="#222" stroke-width="1.6" stroke-linecap="butt"/>
<line x1="1095.7" y1="214.0" x2="1099.7" y2="214.0" stroke="#222" stroke-width="1.6" stroke-linecap="butt"/>
<line x1="1095.7" y1="344.8" x2="1099.7" y2="344.8" stroke="#222" stroke-width="1.6" stroke-linecap="butt"/>
<line x1="1095.7" y1="475.6" x2="1099.7" y2="475.6" stroke="#222" stroke-width="1.6" stroke-linecap="butt"/>
<line x1="1095.7" y1="606.4000000000001" x2="1099.7" y2="606.4000000000001" stroke="#222" stroke-width="1.6" stroke-linecap="butt"/>
<line x1="1226.5" y1="214.0" x2="1230.5" y2="214.0" stroke="#222" stroke-width="1.6" stroke-linecap="butt"/>
<line x1="1226.5" y1="344.8" x2="1230.5" y2="344.8" stroke="#222" stroke-width="1.6" stroke-linecap="butt"/>
<line x1="1226.5" y1="475.6" x2="1230.5" y2="475.6" stroke="#222" stroke-width="1.6" stroke-linecap="butt"/>
<line x1="1226.5" y1="606.4000000000001" x2="1230.5" y2="606.4000000000001" stroke="#222" stroke-width="1.6" stroke-linecap="butt"/>
<line x1="1357.3" y1="214.0" x2="1361.3" y2="214.0" stroke="#222" stroke-width="1.6" stroke-linecap="butt"/>
<line x1="1357.3" y1="344.8" x2="1361.3" y2="344.8" stroke="#222" stroke-width="1.6" stroke-linecap="butt"/>
<line x1="1357.3" y1="475.6" x2="1361.3" y2="475.6" stroke="#222" stroke-width="1.6" stroke-linecap="butt"/>
<line x1="1357.3" y1="606.4000000000001" x2="1361.3" y2="606.4000000000001" stroke="#222" stroke-width="1.6" stroke-linecap="butt"/>
<line x1="1488.1" y1="214.0" x2="1492.1" y2="214.0" stroke="#222" stroke-width="1.6" stroke-linecap="butt"/>
<line x1="1488.1" y1="344.8" x2="1492.1" y2="344.8" stroke="#222" stroke-width="1.6" stroke-linecap="butt"/>
<line x1="1488.1" y1="475.6" x2="1492.1" y2="475.6" stroke="#222" stroke-width="1.6" stroke-linecap="butt"/>
<line x1="1488.1" y1="606.4000000000001" x2="1492.1" y2="606.4000000000001" stroke="#222" stroke-width="1.6" stroke-linecap="butt"/>
<line x1="1618.9" y1="214.0" x2="1622.9" y2="214.0" stroke="#222" stroke-width="1.6" stroke-linecap="butt"/>
<line x1="1618.9" y1="344.8" x2="1622.9" y2="344.8" stroke="#222" stroke-width="1.6" stroke-linecap="butt"/>
<line x1="1618.9" y1="475.6" x2="1622.9" y2="475.6" stroke="#222" stroke-width="1.6" stroke-linecap="butt"/>
<line x1="1618.9" y1="606.4000000000001" x2="1622.9" y2="606.4000000000001" stroke="#222" stroke-width="1.6" stroke-linecap="butt"/>
<line x1="1749.7" y1="214.0" x2="1753.7" y2="214.0" stroke="#222" stroke-width="1.6" stroke-linecap="butt"/>
<line x1="1749.7" y1="344.8" x2="1753.7" y2="344.8" stroke="#222" stroke-width="1.6" stroke-linecap="butt"/>
<line x1="1749.7" y1="475.6" x2="1753.7" y2="475.6" stroke="#222" stroke-width="1.6" stroke-linecap="butt"/>
<line x1="1749.7" y1="606.4000000000001" x2="1753.7" y2="606.4000000000001" stroke="#222" stroke-width="1.6" stroke-linecap="butt"/>
<path d="M957.7 497.9 L1097.3 508.7 L1097.3 615.9 L957.7 615.9 Z" stroke="#e9e3a0" stroke-width="1.0" fill="#457389" fill-opacity="0.9"/>
<rect x="957.7" y="366.5" width="80.6" height="87" fill="#f8c95c" fill-opacity="0.9"/>
<line x1="966.9" y1="179.3" x2="1863" y2="179.3" stroke="#1a1a1a" stroke-width="1.0" stroke-linecap="butt"/>
<line x1="966.9" y1="192.6" x2="1863" y2="192.6" stroke="#1a1a1a" stroke-width="1.0" stroke-linecap="butt"/>
<line x1="965.4" y1="179.3" x2="968.4" y2="179.3" stroke="#1a1a1a" stroke-width="2" stroke-linecap="butt"/>
<line x1="965.4" y1="192.6" x2="968.4" y2="192.6" stroke="#1a1a1a" stroke-width="2" stroke-linecap="butt"/>
<line x1="1096.2" y1="179.3" x2="1099.2" y2="179.3" stroke="#1a1a1a" stroke-width="2" stroke-linecap="butt"/>
<line x1="1096.2" y1="192.6" x2="1099.2" y2="192.6" stroke="#1a1a1a" stroke-width="2" stroke-linecap="butt"/>
<line x1="1227.0" y1="179.3" x2="1230.0" y2="179.3" stroke="#1a1a1a" stroke-width="2" stroke-linecap="butt"/>
<line x1="1227.0" y1="192.6" x2="1230.0" y2="192.6" stroke="#1a1a1a" stroke-width="2" stroke-linecap="butt"/>
<line x1="1357.8" y1="179.3" x2="1360.8" y2="179.3" stroke="#1a1a1a" stroke-width="2" stroke-linecap="butt"/>
<line x1="1357.8" y1="192.6" x2="1360.8" y2="192.6" stroke="#1a1a1a" stroke-width="2" stroke-linecap="butt"/>
<line x1="1488.6" y1="179.3" x2="1491.6" y2="179.3" stroke="#1a1a1a" stroke-width="2" stroke-linecap="butt"/>
<line x1="1488.6" y1="192.6" x2="1491.6" y2="192.6" stroke="#1a1a1a" stroke-width="2" stroke-linecap="butt"/>
<line x1="1619.4" y1="179.3" x2="1622.4" y2="179.3" stroke="#1a1a1a" stroke-width="2" stroke-linecap="butt"/>
<line x1="1619.4" y1="192.6" x2="1622.4" y2="192.6" stroke="#1a1a1a" stroke-width="2" stroke-linecap="butt"/>
<line x1="1750.2" y1="179.3" x2="1753.2" y2="179.3" stroke="#1a1a1a" stroke-width="2" stroke-linecap="butt"/>
<line x1="1750.2" y1="192.6" x2="1753.2" y2="192.6" stroke="#1a1a1a" stroke-width="2" stroke-linecap="butt"/>
<text x="1032.3" y="189.5" font-size="3.8" fill="#444" text-anchor="middle" font-weight="normal" font-style="italic">30'-0"</text>
<text x="1163.1000000000001" y="189.5" font-size="3.8" fill="#444" text-anchor="middle" font-weight="normal" font-style="italic">30'-0"</text>
<text x="1293.9" y="189.5" font-size="3.8" fill="#444" text-anchor="middle" font-weight="normal" font-style="italic">30'-0"</text>
<text x="1424.7" y="189.5" font-size="3.8" fill="#444" text-anchor="middle" font-weight="normal" font-style="italic">30'-0"</text>
<text x="1555.5" y="189.5" font-size="3.8" fill="#444" text-anchor="middle" font-weight="normal" font-style="italic">30'-0"</text>
<text x="1686.3000000000002" y="189.5" font-size="3.8" fill="#444" text-anchor="middle" font-weight="normal" font-style="italic">30'-0"</text>
<text x="1817" y="189.5" font-size="3.8" fill="#444" text-anchor="middle" font-weight="normal" font-style="italic">30'-0"</text>
<text x="1555" y="176" font-size="3.8" fill="#444" text-anchor="middle" font-weight="normal" font-style="italic">275'-0"</text>
<line x1="955.5" y1="203.8" x2="1862.5" y2="203.8" stroke="#111" stroke-width="2.7" stroke-linecap="butt"/>
<line x1="956.4" y1="202.5" x2="956.4" y2="618.5" stroke="#111" stroke-width="2.7" stroke-linecap="butt"/>
<line x1="955.5" y1="617.3" x2="1862.5" y2="617.3" stroke="#111" stroke-width="2.7" stroke-linecap="butt"/>
<line x1="960" y1="205" x2="961.2" y2="205" stroke="#111" stroke-width="1.4" stroke-linecap="butt"/>
<line x1="960" y1="619" x2="961.2" y2="619" stroke="#111" stroke-width="1.4" stroke-linecap="butt"/>
<line x1="989" y1="205" x2="990.2" y2="205" stroke="#111" stroke-width="1.4" stroke-linecap="butt"/>
<line x1="989" y1="619" x2="990.2" y2="619" stroke="#111" stroke-width="1.4" stroke-linecap="butt"/>
<line x1="1018" y1="205" x2="1019.2" y2="205" stroke="#111" stroke-width="1.4" stroke-linecap="butt"/>
<line x1="1018" y1="619" x2="1019.2" y2="619" stroke="#111" stroke-width="1.4" stroke-linecap="butt"/>
<line x1="1047" y1="205" x2="1048.2" y2="205" stroke="#111" stroke-width="1.4" stroke-linecap="butt"/>
<line x1="1047" y1="619" x2="1048.2" y2="619" stroke="#111" stroke-width="1.4" stroke-linecap="butt"/>
<line x1="1076" y1="205" x2="1077.2" y2="205" stroke="#111" stroke-width="1.4" stroke-linecap="butt"/>
<line x1="1076" y1="619" x2="1077.2" y2="619" stroke="#111" stroke-width="1.4" stroke-linecap="butt"/>
<line x1="1105" y1="205" x2="1106.2" y2="205" stroke="#111" stroke-width="1.4" stroke-linecap="butt"/>
<line x1="1105" y1="619" x2="1106.2" y2="619" stroke="#111" stroke-width="1.4" stroke-linecap="butt"/>
<line x1="1134" y1="205" x2="1135.2" y2="205" stroke="#111" stroke-width="1.4" stroke-linecap="butt"/>
<line x1="1134" y1="619" x2="1135.2" y2="619" stroke="#111" stroke-width="1.4" stroke-linecap="butt"/>
<line x1="1163" y1="205" x2="1164.2" y2="205" stroke="#111" stroke-width="1.4" stroke-linecap="butt"/>
<line x1="1163" y1="619" x2="1164.2" y2="619" stroke="#111" stroke-width="1.4" stroke-linecap="butt"/>
<line x1="1192" y1="205" x2="1193.2" y2="205" stroke="#111" stroke-width="1.4" stroke-linecap="butt"/>
<line x1="1192" y1="619" x2="1193.2" y2="619" stroke="#111" stroke-width="1.4" stroke-linecap="butt"/>
<line x1="1221" y1="205" x2="1222.2" y2="205" stroke="#111" stroke-width="1.4" stroke-linecap="butt"/>
<line x1="1221" y1="619" x2="1222.2" y2="619" stroke="#111" stroke-width="1.4" stroke-linecap="butt"/>
<line x1="1250" y1="205" x2="1251.2" y2="205" stroke="#111" stroke-width="1.4" stroke-linecap="butt"/>
<line x1="1250" y1="619" x2="1251.2" y2="619" stroke="#111" stroke-width="1.4" stroke-linecap="butt"/>
<line x1="1279" y1="205" x2="1280.2" y2="205" stroke="#111" stroke-width="1.4" stroke-linecap="butt"/>
<line x1="1279" y1="619" x2="1280.2" y2="619" stroke="#111" stroke-width="1.4" stroke-linecap="butt"/>
<line x1="1308" y1="205" x2="1309.2" y2="205" stroke="#111" stroke-width="1.4" stroke-linecap="butt"/>
<line x1="1308" y1="619" x2="1309.2" y2="619" stroke="#111" stroke-width="1.4" stroke-linecap="butt"/>
<line x1="1337" y1="205" x2="1338.2" y2="205" stroke="#111" stroke-width="1.4" stroke-linecap="butt"/>
<line x1="1337" y1="619" x2="1338.2" y2="619" stroke="#111" stroke-width="1.4" stroke-linecap="butt"/>
<line x1="1366" y1="205" x2="1367.2" y2="205" stroke="#111" stroke-width="1.4" stroke-linecap="butt"/>
<line x1="1366" y1="619" x2="1367.2" y2="619" stroke="#111" stroke-width="1.4" stroke-linecap="butt"/>
<line x1="1395" y1="205" x2="1396.2" y2="205" stroke="#111" stroke-width="1.4" stroke-linecap="butt"/>
<line x1="1395" y1="619" x2="1396.2" y2="619" stroke="#111" stroke-width="1.4" stroke-linecap="butt"/>
<line x1="1424" y1="205" x2="1425.2" y2="205" stroke="#111" stroke-width="1.4" stroke-linecap="butt"/>
<line x1="1424" y1="619" x2="1425.2" y2="619" stroke="#111" stroke-width="1.4" stroke-linecap="butt"/>
<line x1="1453" y1="205" x2="1454.2" y2="205" stroke="#111" stroke-width="1.4" stroke-linecap="butt"/>
<line x1="1453" y1="619" x2="1454.2" y2="619" stroke="#111" stroke-width="1.4" stroke-linecap="butt"/>
<line x1="1482" y1="205" x2="1483.2" y2="205" stroke="#111" stroke-width="1.4" stroke-linecap="butt"/>
<line x1="1482" y1="619" x2="1483.2" y2="619" stroke="#111" stroke-width="1.4" stroke-linecap="butt"/>
<line x1="1511" y1="205" x2="1512.2" y2="205" stroke="#111" stroke-width="1.4" stroke-linecap="butt"/>
<line x1="1511" y1="619" x2="1512.2" y2="619" stroke="#111" stroke-width="1.4" stroke-linecap="butt"/>
<line x1="1540" y1="205" x2="1541.2" y2="205" stroke="#111" stroke-width="1.4" stroke-linecap="butt"/>
<line x1="1540" y1="619" x2="1541.2" y2="619" stroke="#111" stroke-width="1.4" stroke-linecap="butt"/>
<line x1="1569" y1="205" x2="1570.2" y2="205" stroke="#111" stroke-width="1.4" stroke-linecap="butt"/>
<line x1="1569" y1="619" x2="1570.2" y2="619" stroke="#111" stroke-width="1.4" stroke-linecap="butt"/>
<line x1="1598" y1="205" x2="1599.2" y2="205" stroke="#111" stroke-width="1.4" stroke-linecap="butt"/>
<line x1="1598" y1="619" x2="1599.2" y2="619" stroke="#111" stroke-width="1.4" stroke-linecap="butt"/>
<line x1="1627" y1="205" x2="1628.2" y2="205" stroke="#111" stroke-width="1.4" stroke-linecap="butt"/>
<line x1="1627" y1="619" x2="1628.2" y2="619" stroke="#111" stroke-width="1.4" stroke-linecap="butt"/>
<line x1="1656" y1="205" x2="1657.2" y2="205" stroke="#111" stroke-width="1.4" stroke-linecap="butt"/>
<line x1="1656" y1="619" x2="1657.2" y2="619" stroke="#111" stroke-width="1.4" stroke-linecap="butt"/>
<line x1="1685" y1="205" x2="1686.2" y2="205" stroke="#111" stroke-width="1.4" stroke-linecap="butt"/>
<line x1="1685" y1="619" x2="1686.2" y2="619" stroke="#111" stroke-width="1.4" stroke-linecap="butt"/>
<line x1="1714" y1="205" x2="1715.2" y2="205" stroke="#111" stroke-width="1.4" stroke-linecap="butt"/>
<line x1="1714" y1="619" x2="1715.2" y2="619" stroke="#111" stroke-width="1.4" stroke-linecap="butt"/>
<line x1="1743" y1="205" x2="1744.2" y2="205" stroke="#111" stroke-width="1.4" stroke-linecap="butt"/>
<line x1="1743" y1="619" x2="1744.2" y2="619" stroke="#111" stroke-width="1.4" stroke-linecap="butt"/>
<line x1="1772" y1="205" x2="1773.2" y2="205" stroke="#111" stroke-width="1.4" stroke-linecap="butt"/>
<line x1="1772" y1="619" x2="1773.2" y2="619" stroke="#111" stroke-width="1.4" stroke-linecap="butt"/>
<line x1="1801" y1="205" x2="1802.2" y2="205" stroke="#111" stroke-width="1.4" stroke-linecap="butt"/>
<line x1="1801" y1="619" x2="1802.2" y2="619" stroke="#111" stroke-width="1.4" stroke-linecap="butt"/>
<line x1="1830" y1="205" x2="1831.2" y2="205" stroke="#111" stroke-width="1.4" stroke-linecap="butt"/>
<line x1="1830" y1="619" x2="1831.2" y2="619" stroke="#111" stroke-width="1.4" stroke-linecap="butt"/>
<line x1="1859" y1="205" x2="1860.2" y2="205" stroke="#111" stroke-width="1.4" stroke-linecap="butt"/>
<line x1="1859" y1="619" x2="1860.2" y2="619" stroke="#111" stroke-width="1.4" stroke-linecap="butt"/>
<line x1="957.6" y1="323.6" x2="1123" y2="308.5" stroke="#151515" stroke-width="1.7" stroke-linecap="butt"/>
<path d="M1119.4 204 V236 M1119.4 266 V300 Q1119.4 309 1126 308.3 L1198 303.8 Q1206.7 303 1206.7 296 V266 M1206.7 236 V204 M1163 204 V306 M1119.4 251 H1206.7" stroke="#1a1a1a" stroke-width="2.6" fill="none" />
<path d="M1119.4 204 V236 M1119.4 266 V300 Q1119.4 309 1126 308.3 L1198 303.8 Q1206.7 303 1206.7 296 V266 M1206.7 236 V204 M1163 204 V306 M1119.4 251 H1206.7" stroke="#fff" stroke-width="0.75" fill="none" stroke-dasharray="2.2 1.2" />
<path d="M1250.3 204 V236 M1250.3 266 V292 Q1250.3 300.5 1259 299.5 L1337.3 292.6 V204 M1250.3 251 H1337.3" stroke="#1a1a1a" stroke-width="2.6" fill="none" />
<path d="M1250.3 204 V236 M1250.3 266 V292 Q1250.3 300.5 1259 299.5 L1337.3 292.6 V204 M1250.3 251 H1337.3" stroke="#fff" stroke-width="0.75" fill="none" stroke-dasharray="2.2 1.2" />
<line x1="1201" y1="303.7" x2="1258" y2="299.5" stroke="#222" stroke-width="0.8" stroke-dasharray="1.2 1.2" stroke-linecap="butt"/>
<path d="M1338.4 292 L1489 281.5" stroke="#1a1a1a" stroke-width="2.2" fill="none" />
<path d="M1338.4 292 L1489 281.5" stroke="#fff" stroke-width="0.75" fill="none" stroke-dasharray="2.2 1.2" />
<path d="M1489.5 282 H1490.5" stroke="#1a1a1a" stroke-width="2" fill="none" />
<path d="M1489.5 282 H1490.5" stroke="#fff" stroke-width="0.75" fill="none" stroke-dasharray="2.2 1.2" />
<line x1="1490.4" y1="204" x2="1490.4" y2="282" stroke="#111" stroke-width="2.4" stroke-linecap="butt"/>
<rect x="1359.5" y="224.5" width="109" height="43.7" rx="0" stroke="#1a1a1a" stroke-width="1.1" fill="none"/>
<line x1="1361" y1="228.8" x2="1467" y2="228.8" stroke="#333" stroke-width="0.9" stroke-dasharray="1.5 1" stroke-linecap="butt"/>
<line x1="1361" y1="264" x2="1467" y2="264" stroke="#333" stroke-width="0.9" stroke-dasharray="1.5 1" stroke-linecap="butt"/>
<path d="M1490.4 281.5 L1514.3 279.4 A46 46 0 0 1 1597.3 279.5 L1621 281.8" stroke="#222" stroke-width="2.2" fill="none" />
<path d="M1490.4 281.5 L1514.3 279.4 A46 46 0 0 1 1597.3 279.5 L1621 281.8" stroke="#fff" stroke-width="0.8" fill="none" stroke-dasharray="2 1" />
<line x1="1555.8" y1="204" x2="1555.8" y2="254" stroke="#1a1a1a" stroke-width="1.0" stroke-linecap="butt"/>
<rect x="1554.6" y="220" width="2.4" height="26" rx="0" stroke="#1a1a1a" stroke-width="0.7" fill="none"/>
<path d="M1533.3 280 H1577.6 Q1571 292 1555.5 292 Q1540 292 1533.3 280 Z" stroke="#1a1a1a" stroke-width="0.9" fill="none" />
<rect x="1501" y="218.2" width="43.6" height="21.8" rx="0" stroke="#333" stroke-width="0.9" fill="none" stroke-dasharray="1.5 1"/>
<rect x="1566" y="217.6" width="44.4" height="21.9" rx="0" stroke="#333" stroke-width="0.9" fill="none" stroke-dasharray="1.5 1"/>
<line x1="1621" y1="204" x2="1621" y2="281.5" stroke="#111" stroke-width="2.4" stroke-linecap="butt"/>
<path d="M1686.3 204 V286.2" stroke="#1a1a1a" stroke-width="2.6" fill="none" />
<path d="M1686.3 204 V286.2" stroke="#fff" stroke-width="0.75" fill="none" stroke-dasharray="2.2 1.2" />
<path d="M1773.1 204 V292.8" stroke="#1a1a1a" stroke-width="2.6" fill="none" />
<path d="M1773.1 204 V292.8" stroke="#fff" stroke-width="0.75" fill="none" stroke-dasharray="2.2 1.2" />
<path d="M1621 281.8 L1772.4 292.8" stroke="#1a1a1a" stroke-width="2.2" fill="none" />
<path d="M1621 281.8 L1772.4 292.8" stroke="#fff" stroke-width="0.75" fill="none" stroke-dasharray="2.2 1.2" />
<rect x="1642.5" y="216.6" width="22.5" height="54" rx="0" stroke="#333" stroke-width="0.9" fill="none" stroke-dasharray="1.5 1"/>
<rect x="1703.5" y="228.6" width="53.5" height="30.2" rx="0" stroke="#333" stroke-width="0.9" fill="none" stroke-dasharray="1.5 1"/>
<path d="M1773.1 292.8 L1852.6 299.3 Q1861.2 298 1861.2 290 V204 M1773.1 251.2 H1861.2" stroke="#1a1a1a" stroke-width="2.6" fill="none" />
<path d="M1773.1 292.8 L1852.6 299.3 Q1861.2 298 1861.2 290 V204 M1773.1 251.2 H1861.2" stroke="#fff" stroke-width="0.75" fill="none" stroke-dasharray="2.2 1.2" />
<path d="M1119.4 235 A13 13 0 0 1 1132.4 248" stroke="#1a1a1a" stroke-width="0.9" fill="none" />
<path d="M1132.4 254 A13 13 0 0 1 1119.4 267" stroke="#1a1a1a" stroke-width="0.9" fill="none" />
<path d="M1119.4 251 H1133.4" stroke="#111" stroke-width="5.4" fill="none" />
<path d="M1119.4 251 H1133.4" stroke="#fff" stroke-width="1.0" fill="none" stroke-dasharray="1.5 1.2" />
<circle cx="1119.4" cy="242.3" r="4.2" stroke="#1a1a1a" stroke-width="0.9" fill="#fff"/>
<circle cx="1119.4" cy="260" r="4.2" stroke="#1a1a1a" stroke-width="0.9" fill="#fff"/>
<text x="1119.4" y="243.4" font-size="3.0" fill="#444" text-anchor="middle" font-weight="normal" >201</text>
<text x="1119.4" y="261.1" font-size="3.0" fill="#444" text-anchor="middle" font-weight="normal" >202</text>
<path d="M1206.7 235 A13 13 0 0 0 1193.7 248" stroke="#1a1a1a" stroke-width="0.9" fill="none" />
<path d="M1193.7 254 A13 13 0 0 0 1206.7 267" stroke="#1a1a1a" stroke-width="0.9" fill="none" />
<path d="M1206.7 251 H1192.7" stroke="#111" stroke-width="5.4" fill="none" />
<path d="M1206.7 251 H1192.7" stroke="#fff" stroke-width="1.0" fill="none" stroke-dasharray="1.5 1.2" />
<circle cx="1206.7" cy="242.3" r="4.2" stroke="#1a1a1a" stroke-width="0.9" fill="#fff"/>
<circle cx="1206.7" cy="260" r="4.2" stroke="#1a1a1a" stroke-width="0.9" fill="#fff"/>
<text x="1206.7" y="243.4" font-size="3.0" fill="#444" text-anchor="middle" font-weight="normal" >201</text>
<text x="1206.7" y="261.1" font-size="3.0" fill="#444" text-anchor="middle" font-weight="normal" >202</text>
<path d="M1250.3 235 A13 13 0 0 1 1263.3 248" stroke="#1a1a1a" stroke-width="0.9" fill="none" />
<path d="M1263.3 254 A13 13 0 0 1 1250.3 267" stroke="#1a1a1a" stroke-width="0.9" fill="none" />
<path d="M1250.3 251 H1264.3" stroke="#111" stroke-width="5.4" fill="none" />
<path d="M1250.3 251 H1264.3" stroke="#fff" stroke-width="1.0" fill="none" stroke-dasharray="1.5 1.2" />
<circle cx="1250.3" cy="242.3" r="4.2" stroke="#1a1a1a" stroke-width="0.9" fill="#fff"/>
<circle cx="1250.3" cy="260" r="4.2" stroke="#1a1a1a" stroke-width="0.9" fill="#fff"/>
<text x="1250.3" y="243.4" font-size="3.0" fill="#444" text-anchor="middle" font-weight="normal" >201</text>
<text x="1250.3" y="261.1" font-size="3.0" fill="#444" text-anchor="middle" font-weight="normal" >202</text>
<path d="M1038.7 350.5 A13 13 0 0 0 1025.7 363.5" stroke="#1a1a1a" stroke-width="0.9" fill="none" />
<path d="M1025.7 369.5 A13 13 0 0 0 1038.7 382.5" stroke="#1a1a1a" stroke-width="0.9" fill="none" />
<path d="M1038.7 366.5 H1024.7" stroke="#111" stroke-width="5.4" fill="none" />
<path d="M1038.7 366.5 H1024.7" stroke="#fff" stroke-width="1.0" fill="none" stroke-dasharray="1.5 1.2" />
<circle cx="1038.7" cy="357.8" r="4.2" stroke="#1a1a1a" stroke-width="0.9" fill="#fff"/>
<circle cx="1038.7" cy="375.5" r="4.2" stroke="#1a1a1a" stroke-width="0.9" fill="#fff"/>
<text x="1038.7" y="358.9" font-size="3.0" fill="#444" text-anchor="middle" font-weight="normal" >201</text>
<text x="1038.7" y="376.6" font-size="3.0" fill="#444" text-anchor="middle" font-weight="normal" >202</text>
<path d="M1038.7 437.5 A13 13 0 0 0 1025.7 450.5" stroke="#1a1a1a" stroke-width="0.9" fill="none" />
<path d="M1025.7 456.5 A13 13 0 0 0 1038.7 469.5" stroke="#1a1a1a" stroke-width="0.9" fill="none" />
<path d="M1038.7 453.5 H1024.7" stroke="#111" stroke-width="5.4" fill="none" />
<path d="M1038.7 453.5 H1024.7" stroke="#fff" stroke-width="1.0" fill="none" stroke-dasharray="1.5 1.2" />
<circle cx="1038.7" cy="444.8" r="4.2" stroke="#1a1a1a" stroke-width="0.9" fill="#fff"/>
<circle cx="1038.7" cy="462.5" r="4.2" stroke="#1a1a1a" stroke-width="0.9" fill="#fff"/>
<text x="1038.7" y="445.9" font-size="3.0" fill="#444" text-anchor="middle" font-weight="normal" >201</text>
<text x="1038.7" y="463.6" font-size="3.0" fill="#444" text-anchor="middle" font-weight="normal" >202</text>
<path d="M1304.7 394 A13 13 0 0 1 1317.7 407" stroke="#1a1a1a" stroke-width="0.9" fill="none" />
<path d="M1317.7 413 A13 13 0 0 1 1304.7 426" stroke="#1a1a1a" stroke-width="0.9" fill="none" />
<path d="M1304.7 410 H1318.7" stroke="#111" stroke-width="5.4" fill="none" />
<path d="M1304.7 410 H1318.7" stroke="#fff" stroke-width="1.0" fill="none" stroke-dasharray="1.5 1.2" />
<circle cx="1304.7" cy="401.3" r="4.2" stroke="#1a1a1a" stroke-width="0.9" fill="#fff"/>
<circle cx="1304.7" cy="419" r="4.2" stroke="#1a1a1a" stroke-width="0.9" fill="#fff"/>
<text x="1304.7" y="402.4" font-size="3.0" fill="#444" text-anchor="middle" font-weight="normal" >201</text>
<text x="1304.7" y="420.1" font-size="3.0" fill="#444" text-anchor="middle" font-weight="normal" >202</text>
<path d="M1806 393.7 A13 13 0 0 0 1793 406.7" stroke="#1a1a1a" stroke-width="0.9" fill="none" />
<path d="M1793 412.7 A13 13 0 0 0 1806 425.7" stroke="#1a1a1a" stroke-width="0.9" fill="none" />
<path d="M1806 409.7 H1792" stroke="#111" stroke-width="5.4" fill="none" />
<path d="M1806 409.7 H1792" stroke="#fff" stroke-width="1.0" fill="none" stroke-dasharray="1.5 1.2" />
<circle cx="1806" cy="401.0" r="4.2" stroke="#1a1a1a" stroke-width="0.9" fill="#fff"/>
<circle cx="1806" cy="418.7" r="4.2" stroke="#1a1a1a" stroke-width="0.9" fill="#fff"/>
<text x="1806" y="402.09999999999997" font-size="3.0" fill="#444" text-anchor="middle" font-weight="normal" >201</text>
<text x="1806" y="419.8" font-size="3.0" fill="#444" text-anchor="middle" font-weight="normal" >202</text>
<path d="M1861.2 235.2 A13 13 0 0 0 1848.2 248.2" stroke="#1a1a1a" stroke-width="0.9" fill="none" />
<path d="M1848.2 254.2 A13 13 0 0 0 1861.2 267.2" stroke="#1a1a1a" stroke-width="0.9" fill="none" />
<path d="M1861.2 251.2 H1847.2" stroke="#111" stroke-width="5.4" fill="none" />
<path d="M1861.2 251.2 H1847.2" stroke="#fff" stroke-width="1.0" fill="none" stroke-dasharray="1.5 1.2" />
<circle cx="1861.2" cy="242.5" r="4.2" stroke="#1a1a1a" stroke-width="0.9" fill="#fff"/>
<circle cx="1861.2" cy="260.2" r="4.2" stroke="#1a1a1a" stroke-width="0.9" fill="#fff"/>
<text x="1861.2" y="243.6" font-size="3.0" fill="#444" text-anchor="middle" font-weight="normal" >201</text>
<text x="1861.2" y="261.3" font-size="3.0" fill="#444" text-anchor="middle" font-weight="normal" >202</text>
<path d="M1206.5 546.7 A13 13 0 0 0 1193.5 559.7" stroke="#1a1a1a" stroke-width="0.9" fill="none" />
<path d="M1193.5 565.7 A13 13 0 0 0 1206.5 578.7" stroke="#1a1a1a" stroke-width="0.9" fill="none" />
<path d="M1206.5 562.7 H1192.5" stroke="#111" stroke-width="5.4" fill="none" />
<path d="M1206.5 562.7 H1192.5" stroke="#fff" stroke-width="1.0" fill="none" stroke-dasharray="1.5 1.2" />
<circle cx="1206.5" cy="554.0" r="4.2" stroke="#1a1a1a" stroke-width="0.9" fill="#fff"/>
<circle cx="1206.5" cy="571.7" r="4.2" stroke="#1a1a1a" stroke-width="0.9" fill="#fff"/>
<text x="1206.5" y="555.1" font-size="3.0" fill="#444" text-anchor="middle" font-weight="normal" >201</text>
<text x="1206.5" y="572.8000000000001" font-size="3.0" fill="#444" text-anchor="middle" font-weight="normal" >202</text>
<path d="M1250.2 555 A13 13 0 0 1 1263.2 568" stroke="#1a1a1a" stroke-width="0.9" fill="none" />
<path d="M1263.2 574 A13 13 0 0 1 1250.2 587" stroke="#1a1a1a" stroke-width="0.9" fill="none" />
<path d="M1250.2 571 H1264.2" stroke="#111" stroke-width="5.4" fill="none" />
<path d="M1250.2 571 H1264.2" stroke="#fff" stroke-width="1.0" fill="none" stroke-dasharray="1.5 1.2" />
<circle cx="1250.2" cy="562.3" r="4.2" stroke="#1a1a1a" stroke-width="0.9" fill="#fff"/>
<circle cx="1250.2" cy="580" r="4.2" stroke="#1a1a1a" stroke-width="0.9" fill="#fff"/>
<text x="1250.2" y="563.4" font-size="3.0" fill="#444" text-anchor="middle" font-weight="normal" >201</text>
<text x="1250.2" y="581.1" font-size="3.0" fill="#444" text-anchor="middle" font-weight="normal" >202</text>
<path d="M1337.7 555 A13 13 0 0 0 1324.7 568" stroke="#1a1a1a" stroke-width="0.9" fill="none" />
<path d="M1324.7 574 A13 13 0 0 0 1337.7 587" stroke="#1a1a1a" stroke-width="0.9" fill="none" />
<path d="M1337.7 571 H1323.7" stroke="#111" stroke-width="5.4" fill="none" />
<path d="M1337.7 571 H1323.7" stroke="#fff" stroke-width="1.0" fill="none" stroke-dasharray="1.5 1.2" />
<circle cx="1337.7" cy="562.3" r="4.2" stroke="#1a1a1a" stroke-width="0.9" fill="#fff"/>
<circle cx="1337.7" cy="580" r="4.2" stroke="#1a1a1a" stroke-width="0.9" fill="#fff"/>
<text x="1337.7" y="563.4" font-size="3.0" fill="#444" text-anchor="middle" font-weight="normal" >201</text>
<text x="1337.7" y="581.1" font-size="3.0" fill="#444" text-anchor="middle" font-weight="normal" >202</text>
<path d="M1381.2 555 A13 13 0 0 1 1394.2 568" stroke="#1a1a1a" stroke-width="0.9" fill="none" />
<path d="M1394.2 574 A13 13 0 0 1 1381.2 587" stroke="#1a1a1a" stroke-width="0.9" fill="none" />
<path d="M1381.2 571 H1395.2" stroke="#111" stroke-width="5.4" fill="none" />
<path d="M1381.2 571 H1395.2" stroke="#fff" stroke-width="1.0" fill="none" stroke-dasharray="1.5 1.2" />
<circle cx="1381.2" cy="562.3" r="4.2" stroke="#1a1a1a" stroke-width="0.9" fill="#fff"/>
<circle cx="1381.2" cy="580" r="4.2" stroke="#1a1a1a" stroke-width="0.9" fill="#fff"/>
<text x="1381.2" y="563.4" font-size="3.0" fill="#444" text-anchor="middle" font-weight="normal" >201</text>
<text x="1381.2" y="581.1" font-size="3.0" fill="#444" text-anchor="middle" font-weight="normal" >202</text>
<path d="M1468 555 A13 13 0 0 0 1455 568" stroke="#1a1a1a" stroke-width="0.9" fill="none" />
<path d="M1455 574 A13 13 0 0 0 1468 587" stroke="#1a1a1a" stroke-width="0.9" fill="none" />
<path d="M1468 571 H1454" stroke="#111" stroke-width="5.4" fill="none" />
<path d="M1468 571 H1454" stroke="#fff" stroke-width="1.0" fill="none" stroke-dasharray="1.5 1.2" />
<circle cx="1468" cy="562.3" r="4.2" stroke="#1a1a1a" stroke-width="0.9" fill="#fff"/>
<circle cx="1468" cy="580" r="4.2" stroke="#1a1a1a" stroke-width="0.9" fill="#fff"/>
<text x="1468" y="563.4" font-size="3.0" fill="#444" text-anchor="middle" font-weight="normal" >201</text>
<text x="1468" y="581.1" font-size="3.0" fill="#444" text-anchor="middle" font-weight="normal" >202</text>
<path d="M1642.8 555 A13 13 0 0 1 1655.8 568" stroke="#1a1a1a" stroke-width="0.9" fill="none" />
<path d="M1655.8 574 A13 13 0 0 1 1642.8 587" stroke="#1a1a1a" stroke-width="0.9" fill="none" />
<path d="M1642.8 571 H1656.8" stroke="#111" stroke-width="5.4" fill="none" />
<path d="M1642.8 571 H1656.8" stroke="#fff" stroke-width="1.0" fill="none" stroke-dasharray="1.5 1.2" />
<circle cx="1642.8" cy="562.3" r="4.2" stroke="#1a1a1a" stroke-width="0.9" fill="#fff"/>
<circle cx="1642.8" cy="580" r="4.2" stroke="#1a1a1a" stroke-width="0.9" fill="#fff"/>
<text x="1642.8" y="563.4" font-size="3.0" fill="#444" text-anchor="middle" font-weight="normal" >201</text>
<text x="1642.8" y="581.1" font-size="3.0" fill="#444" text-anchor="middle" font-weight="normal" >202</text>
<path d="M1730.5 555 A13 13 0 0 0 1717.5 568" stroke="#1a1a1a" stroke-width="0.9" fill="none" />
<path d="M1717.5 574 A13 13 0 0 0 1730.5 587" stroke="#1a1a1a" stroke-width="0.9" fill="none" />
<path d="M1730.5 571 H1716.5" stroke="#111" stroke-width="5.4" fill="none" />
<path d="M1730.5 571 H1716.5" stroke="#fff" stroke-width="1.0" fill="none" stroke-dasharray="1.5 1.2" />
<circle cx="1730.5" cy="562.3" r="4.2" stroke="#1a1a1a" stroke-width="0.9" fill="#fff"/>
<circle cx="1730.5" cy="580" r="4.2" stroke="#1a1a1a" stroke-width="0.9" fill="#fff"/>
<text x="1730.5" y="563.4" font-size="3.0" fill="#444" text-anchor="middle" font-weight="normal" >201</text>
<text x="1730.5" y="581.1" font-size="3.0" fill="#444" text-anchor="middle" font-weight="normal" >202</text>
<path d="M1773.4 555 A13 13 0 0 1 1786.4 568" stroke="#1a1a1a" stroke-width="0.9" fill="none" />
<path d="M1786.4 574 A13 13 0 0 1 1773.4 587" stroke="#1a1a1a" stroke-width="0.9" fill="none" />
<path d="M1773.4 571 H1787.4" stroke="#111" stroke-width="5.4" fill="none" />
<path d="M1773.4 571 H1787.4" stroke="#fff" stroke-width="1.0" fill="none" stroke-dasharray="1.5 1.2" />
<circle cx="1773.4" cy="562.3" r="4.2" stroke="#1a1a1a" stroke-width="0.9" fill="#fff"/>
<circle cx="1773.4" cy="580" r="4.2" stroke="#1a1a1a" stroke-width="0.9" fill="#fff"/>
<text x="1773.4" y="563.4" font-size="3.0" fill="#444" text-anchor="middle" font-weight="normal" >201</text>
<text x="1773.4" y="581.1" font-size="3.0" fill="#444" text-anchor="middle" font-weight="normal" >202</text>
<path d="M1861.2 555 A13 13 0 0 0 1848.2 568" stroke="#1a1a1a" stroke-width="0.9" fill="none" />
<path d="M1848.2 574 A13 13 0 0 0 1861.2 587" stroke="#1a1a1a" stroke-width="0.9" fill="none" />
<path d="M1861.2 571 H1847.2" stroke="#111" stroke-width="5.4" fill="none" />
<path d="M1861.2 571 H1847.2" stroke="#fff" stroke-width="1.0" fill="none" stroke-dasharray="1.5 1.2" />
<circle cx="1861.2" cy="562.3" r="4.2" stroke="#1a1a1a" stroke-width="0.9" fill="#fff"/>
<circle cx="1861.2" cy="580" r="4.2" stroke="#1a1a1a" stroke-width="0.9" fill="#fff"/>
<text x="1861.2" y="563.4" font-size="3.0" fill="#444" text-anchor="middle" font-weight="normal" >201</text>
<text x="1861.2" y="581.1" font-size="3.0" fill="#444" text-anchor="middle" font-weight="normal" >202</text>
<path d="M1338 278 Q1351 278 1351 291" stroke="#1a1a1a" stroke-width="0.8" fill="none" />
<circle cx="1347" cy="291.5" r="3.6" stroke="#1a1a1a" stroke-width="0.8" fill="#fff"/>
<path d="M1481 269 Q1468 269 1468 281" stroke="#1a1a1a" stroke-width="0.8" fill="none" />
<circle cx="1475" cy="281" r="3.6" stroke="#1a1a1a" stroke-width="0.8" fill="#fff"/>
<path d="M1492 268 Q1505 268 1505 280" stroke="#1a1a1a" stroke-width="0.8" fill="none" />
<circle cx="1500" cy="281" r="3.6" stroke="#1a1a1a" stroke-width="0.8" fill="#fff"/>
<path d="M1617 269 Q1604 269 1604 281" stroke="#1a1a1a" stroke-width="0.8" fill="none" />
<circle cx="1611" cy="281" r="3.6" stroke="#1a1a1a" stroke-width="0.8" fill="#fff"/>
<path d="M1627 270 Q1640 270 1640 283" stroke="#1a1a1a" stroke-width="0.8" fill="none" />
<circle cx="1635" cy="283" r="3.6" stroke="#1a1a1a" stroke-width="0.8" fill="#fff"/>
<path d="M1689 274 Q1701 274 1701 287" stroke="#1a1a1a" stroke-width="0.8" fill="none" />
<circle cx="1695" cy="287" r="3.6" stroke="#1a1a1a" stroke-width="0.8" fill="#fff"/>
<path d="M1770 279 Q1758 279 1758 292" stroke="#1a1a1a" stroke-width="0.8" fill="none" />
<circle cx="1764" cy="292" r="3.6" stroke="#1a1a1a" stroke-width="0.8" fill="#fff"/>
<path d="M1338 279 Q1352 279 1352 291" stroke="#1a1a1a" stroke-width="0.8" fill="none" />
<circle cx="1346.6" cy="291.3" r="3.6" stroke="#1a1a1a" stroke-width="0.8" fill="#fff"/>
<path d="M1038.7 330 V357 M1038.7 375 V445 M1038.7 462 V497" stroke="#1a1a1a" stroke-width="2.6" fill="none" />
<path d="M1038.7 330 V357 M1038.7 375 V445 M1038.7 462 V497" stroke="#fff" stroke-width="0.75" fill="none" stroke-dasharray="2.2 1.2" />
<path d="M1030 322.8 Q1038.7 322 1038.7 330" stroke="#222" stroke-width="2.2" fill="none" />
<path d="M1038.7 497 Q1038.7 504 1031 503.5" stroke="#222" stroke-width="2.2" fill="none" />
<line x1="957.7" y1="366.8" x2="1038.7" y2="366.8" stroke="#3a3a2a" stroke-width="2.6" stroke-linecap="butt"/>
<line x1="957.7" y1="453.5" x2="1038.7" y2="453.5" stroke="#3a3a2a" stroke-width="2.6" stroke-linecap="butt"/>
<line x1="1038.7" y1="368" x2="1038.7" y2="452" stroke="#333" stroke-width="2.2" stroke-linecap="butt"/>
<rect x="982.4" y="376.5" width="34.6" height="65.8" rx="0" stroke="#b08a3a" stroke-width="0.8" fill="none" stroke-dasharray="1.3 1"/>
<rect x="1065.2" y="338.4" width="290" height="143.4" rx="6" stroke="#333" stroke-width="0.9" fill="none" stroke-dasharray="1 1"/>
<rect x="1077.2" y="350.8" width="276" height="118.9" rx="4" stroke="#111" stroke-width="1.4" fill="none"/>
<path d="M1311 351.6 H1346 Q1353 351.6 1353 358.6 V462.4 Q1353 469.4 1346 469.4 H1311 Q1304.1 469.4 1304.1 462.4 V419 M1304.1 401 V358.6 Q1304.1 351.6 1311 351.6 M1304.1 410 H1353" stroke="#1a1a1a" stroke-width="2.6" fill="none" />
<path d="M1311 351.6 H1346 Q1353 351.6 1353 358.6 V462.4 Q1353 469.4 1346 469.4 H1311 Q1304.1 469.4 1304.1 462.4 V419 M1304.1 401 V358.6 Q1304.1 351.6 1311 351.6 M1304.1 410 H1353" stroke="#fff" stroke-width="0.75" fill="none" stroke-dasharray="2.2 1.2" />
<path d="M1765 351.4 H1800.8 Q1807.8 351.4 1807.8 358.4 V401 M1807.8 419 V462.3 Q1807.8 469.3 1800.8 469.3 H1765 Q1757.7 469.3 1757.7 462 V358.4 Q1757.7 351.4 1765 351.4 M1757.7 409.7 H1807.8" stroke="#1a1a1a" stroke-width="2.6" fill="none" />
<path d="M1765 351.4 H1800.8 Q1807.8 351.4 1807.8 358.4 V401 M1807.8 419 V462.3 Q1807.8 469.3 1800.8 469.3 H1765 Q1757.7 469.3 1757.7 462 V358.4 Q1757.7 351.4 1765 351.4 M1757.7 409.7 H1807.8" stroke="#fff" stroke-width="0.75" fill="none" stroke-dasharray="2.2 1.2" />
<line x1="1808" y1="351.2" x2="1863" y2="351.2" stroke="#1a1a1a" stroke-width="1.4" stroke-linecap="butt"/>
<line x1="1808" y1="469.3" x2="1863" y2="469.3" stroke="#1a1a1a" stroke-width="1.4" stroke-linecap="butt"/>
<line x1="1757" y1="338.6" x2="1863" y2="338.6" stroke="#333" stroke-width="0.9" stroke-dasharray="1 1" stroke-linecap="butt"/>
<line x1="1757" y1="481.6" x2="1863" y2="481.6" stroke="#333" stroke-width="0.9" stroke-dasharray="1 1" stroke-linecap="butt"/>
<path d="M1362 325.5 H1375 Q1381 325.5 1381 331 V339.6 M1421.6 339.6 V330 L1515 337 Q1531 340 1531 356 V470 Q1531 486 1515 488 L1421.6 495 V481 M1381 481 V489 Q1381 495 1375 495 H1362 Q1353.5 495 1353.5 487 V334 Q1353.5 325.5 1362 325.5" stroke="#1a1a1a" stroke-width="2.3" fill="none" />
<path d="M1362 325.5 H1375 Q1381 325.5 1381 331 V339.6 M1421.6 339.6 V330 L1515 337 Q1531 340 1531 356 V470 Q1531 486 1515 488 L1421.6 495 V481 M1381 481 V489 Q1381 495 1375 495 H1362 Q1353.5 495 1353.5 487 V334 Q1353.5 325.5 1362 325.5" stroke="#fff" stroke-width="0.75" fill="none" stroke-dasharray="2.2 1.2" />
<rect x="1363.7" y="339.6" width="132.6" height="141.4" rx="0" stroke="#222" stroke-width="2.0" fill="none"/>
<line x1="1363.7" y1="421" x2="1496.3" y2="421" stroke="#222" stroke-width="2.2" stroke-linecap="butt"/>
<line x1="1400" y1="339.6" x2="1400" y2="481" stroke="#222" stroke-width="2.0" stroke-linecap="butt"/>
<line x1="1475" y1="339.6" x2="1475" y2="421" stroke="#222" stroke-width="2.2" stroke-linecap="butt"/>
<line x1="1448" y1="339.6" x2="1448" y2="386" stroke="#222" stroke-width="1.6" stroke-linecap="butt"/>
<line x1="1400" y1="386" x2="1448" y2="386" stroke="#222" stroke-width="1.6" stroke-linecap="butt"/>
<rect x="1500.2" y="354.3" width="27.5" height="35.4" rx="0" stroke="#1a1a1a" stroke-width="1.0" fill="none"/>
<path d="M1500.2 354.3 L1527.7 389.7 M1527.7 354.3 L1500.2 389.7" stroke="#1a1a1a" stroke-width="0.7" fill="none" />
<rect x="1500.2" y="392.7" width="27.5" height="35.3" rx="0" stroke="#1a1a1a" stroke-width="1.0" fill="none"/>
<path d="M1500.2 392.7 L1527.7 428 M1527.7 392.7 L1500.2 428" stroke="#1a1a1a" stroke-width="0.7" fill="none" />
<rect x="1503" y="435" width="24" height="31" rx="0" stroke="#1a1a1a" stroke-width="1.0" fill="none"/>
<path d="M1503 447 L1527 466 M1527 447 L1503 466" stroke="#1a1a1a" stroke-width="0.7" fill="none" />
<rect x="1515" y="435" width="12" height="11" rx="0" stroke="#1a1a1a" stroke-width="0.8" fill="none"/>
<line x1="1496.3" y1="432" x2="1531" y2="432" stroke="#1a1a1a" stroke-width="1.4" stroke-linecap="butt"/>
<path d="M1478 345 L1493 415 M1493 345 L1478 415" stroke="#1a1a1a" stroke-width="0.8" fill="none" />
<line x1="1364" y1="376" x2="1400" y2="376" stroke="#1a1a1a" stroke-width="1.4" stroke-linecap="butt"/>
<line x1="1366" y1="378.5" x2="1381" y2="378.5" stroke="#111" stroke-width="1.4" stroke-dasharray="1.8 1.6" stroke-linecap="butt"/>
<line x1="1366" y1="382.6" x2="1381" y2="382.6" stroke="#111" stroke-width="1.4" stroke-dasharray="1.8 1.6" stroke-linecap="butt"/>
<line x1="1366" y1="386.7" x2="1381" y2="386.7" stroke="#111" stroke-width="1.4" stroke-dasharray="1.8 1.6" stroke-linecap="butt"/>
<line x1="1366" y1="390.8" x2="1381" y2="390.8" stroke="#111" stroke-width="1.4" stroke-dasharray="1.8 1.6" stroke-linecap="butt"/>
<line x1="1366" y1="394.9" x2="1381" y2="394.9" stroke="#111" stroke-width="1.4" stroke-dasharray="1.8 1.6" stroke-linecap="butt"/>
<line x1="1366" y1="399.0" x2="1381" y2="399.0" stroke="#111" stroke-width="1.4" stroke-dasharray="1.8 1.6" stroke-linecap="butt"/>
<line x1="1366" y1="403.1" x2="1381" y2="403.1" stroke="#111" stroke-width="1.4" stroke-dasharray="1.8 1.6" stroke-linecap="butt"/>
<line x1="1366" y1="407.2" x2="1381" y2="407.2" stroke="#111" stroke-width="1.4" stroke-dasharray="1.8 1.6" stroke-linecap="butt"/>
<rect x="1385" y="376" width="2.2" height="31" rx="0" stroke="#1a1a1a" stroke-width="0" fill="#111"/>
<rect x="1388.5" y="377.0" width="10" height="4.1" rx="0" stroke="#111" stroke-width="1.1" fill="none"/>
<rect x="1388.5" y="381.1" width="10" height="4.1" rx="0" stroke="#111" stroke-width="1.1" fill="none"/>
<rect x="1388.5" y="385.2" width="10" height="4.1" rx="0" stroke="#111" stroke-width="1.1" fill="none"/>
<rect x="1388.5" y="389.3" width="10" height="4.1" rx="0" stroke="#111" stroke-width="1.1" fill="none"/>
<rect x="1388.5" y="393.4" width="10" height="4.1" rx="0" stroke="#111" stroke-width="1.1" fill="none"/>
<rect x="1388.5" y="397.5" width="10" height="4.1" rx="0" stroke="#111" stroke-width="1.1" fill="none"/>
<rect x="1388.5" y="401.6" width="10" height="4.1" rx="0" stroke="#111" stroke-width="1.1" fill="none"/>
<line x1="1393.5" y1="377" x2="1393.5" y2="405" stroke="#1a1a1a" stroke-width="1.1" stroke-linecap="butt"/>
<line x1="1366" y1="417.4" x2="1399" y2="417.4" stroke="#222" stroke-width="0.9" stroke-dasharray="3 2" stroke-linecap="butt"/>
<rect x="1404" y="371" width="9" height="14" rx="0" stroke="#333" stroke-width="0.6" fill="none" stroke-dasharray="1 0.8"/>
<rect x="1415" y="371" width="9" height="14" rx="0" stroke="#333" stroke-width="0.6" fill="none" stroke-dasharray="1 0.8"/>
<rect x="1426" y="371" width="9" height="14" rx="0" stroke="#333" stroke-width="0.6" fill="none" stroke-dasharray="1 0.8"/>
<rect x="1437" y="371" width="9" height="14" rx="0" stroke="#333" stroke-width="0.6" fill="none" stroke-dasharray="1 0.8"/>
<circle cx="1436" cy="431" r="2.3" stroke="#222" stroke-width="1.2" fill="#777"/>
<circle cx="1450" cy="431" r="2.3" stroke="#222" stroke-width="1.2" fill="#777"/>
<circle cx="1464" cy="431" r="2.3" stroke="#222" stroke-width="1.2" fill="#777"/>
<circle cx="1488" cy="431" r="2.3" stroke="#222" stroke-width="1.2" fill="#777"/>
<line x1="1430" y1="425" x2="1430" y2="440" stroke="#1a1a1a" stroke-width="1.4" stroke-linecap="butt"/>
<line x1="1443" y1="425" x2="1443" y2="440" stroke="#1a1a1a" stroke-width="1.4" stroke-linecap="butt"/>
<line x1="1457" y1="425" x2="1457" y2="440" stroke="#1a1a1a" stroke-width="1.4" stroke-linecap="butt"/>
<line x1="1470" y1="425" x2="1470" y2="440" stroke="#1a1a1a" stroke-width="1.4" stroke-linecap="butt"/>
<rect x="1428" y="468" width="39" height="11" rx="0" stroke="#1a1a1a" stroke-width="1.4" fill="none"/>
<rect x="1437" y="471" width="7" height="4" rx="0" stroke="#1a1a1a" stroke-width="0.9" fill="none"/>
<rect x="1456" y="471" width="7" height="4" rx="0" stroke="#1a1a1a" stroke-width="0.9" fill="none"/>
<path d="M1400 453 H1418 V442 H1430" stroke="#1a1a1a" stroke-width="1.6" fill="none" />
<rect x="1365.5" y="452" width="9" height="17" rx="0" stroke="#1a1a1a" stroke-width="1.0" fill="none"/>
<rect x="1367.5" y="458" width="5" height="5" rx="0" stroke="#1a1a1a" stroke-width="1.2" fill="none"/>
<line x1="1419" y1="414" x2="1411" y2="430" stroke="#1a1a1a" stroke-width="0.7" stroke-linecap="butt"/>
<line x1="1353" y1="344.8" x2="1363" y2="344.8" stroke="#1a1a1a" stroke-width="0.9" stroke-linecap="butt"/>
<circle cx="1520.8" cy="501.7" r="9" stroke="#1a1a1a" stroke-width="0.9" fill="#fff"/>
<line x1="1497" y1="486" x2="1510" y2="499" stroke="#1a1a1a" stroke-width="0.8" stroke-linecap="butt"/>
<circle cx="1391" cy="340.5" r="3.6" stroke="#1a1a1a" stroke-width="0.8" fill="#fff"/>
<path d="M1384 340.5 A7 7 0 0 1 1391 333.5" stroke="#1a1a1a" stroke-width="0.7" fill="none" />
<circle cx="1409" cy="340.5" r="3.6" stroke="#1a1a1a" stroke-width="0.8" fill="#fff"/>
<path d="M1402 340.5 A7 7 0 0 1 1409 333.5" stroke="#1a1a1a" stroke-width="0.7" fill="none" />
<circle cx="1449" cy="348" r="3.6" stroke="#1a1a1a" stroke-width="0.8" fill="#fff"/>
<path d="M1442 348 A7 7 0 0 1 1449 341" stroke="#1a1a1a" stroke-width="0.7" fill="none" />
<circle cx="1409" cy="452" r="3.6" stroke="#1a1a1a" stroke-width="0.8" fill="#fff"/>
<path d="M1402 452 A7 7 0 0 1 1409 445" stroke="#1a1a1a" stroke-width="0.7" fill="none" />
<circle cx="1474" cy="461" r="3.6" stroke="#1a1a1a" stroke-width="0.8" fill="#fff"/>
<path d="M1467 461 A7 7 0 0 1 1474 454" stroke="#1a1a1a" stroke-width="0.7" fill="none" />
<circle cx="1391" cy="481" r="3.6" stroke="#1a1a1a" stroke-width="0.8" fill="#fff"/>
<path d="M1384 481 A7 7 0 0 1 1391 474" stroke="#1a1a1a" stroke-width="0.7" fill="none" />
<circle cx="1409" cy="481" r="3.6" stroke="#1a1a1a" stroke-width="0.8" fill="#fff"/>
<path d="M1402 481 A7 7 0 0 1 1409 474" stroke="#1a1a1a" stroke-width="0.7" fill="none" />
<path d="M1748 325.5 H1737 Q1731 325.5 1731 331 V340.6 M1690 340.6 V330 L1597 337 Q1580 340 1580 356 V470 Q1580 486 1597 488 L1690 495 V481 M1731 481 V489 Q1731 495 1737 495 H1748 Q1756.6 495 1756.6 487 V334 Q1756.6 325.5 1748 325.5" stroke="#1a1a1a" stroke-width="2.3" fill="none" />
<path d="M1748 325.5 H1737 Q1731 325.5 1731 331 V340.6 M1690 340.6 V330 L1597 337 Q1580 340 1580 356 V470 Q1580 486 1597 488 L1690 495 V481 M1731 481 V489 Q1731 495 1737 495 H1748 Q1756.6 495 1756.6 487 V334 Q1756.6 325.5 1748 325.5" stroke="#fff" stroke-width="0.75" fill="none" stroke-dasharray="2.2 1.2" />
<rect x="1580.8" y="340.6" width="167" height="140.5" rx="0" stroke="#222" stroke-width="2.0" fill="none"/>
<line x1="1617" y1="340.6" x2="1617" y2="469.3" stroke="#222" stroke-width="2.4" stroke-linecap="butt"/>
<line x1="1580.8" y1="469.3" x2="1617" y2="469.3" stroke="#1a1a1a" stroke-width="2.0" stroke-linecap="butt"/>
<line x1="1617" y1="421" x2="1712" y2="421" stroke="#222" stroke-width="2.2" stroke-linecap="butt"/>
<line x1="1712" y1="340.6" x2="1712" y2="481" stroke="#222" stroke-width="2.2" stroke-linecap="butt"/>
<line x1="1712" y1="398" x2="1748" y2="398" stroke="#222" stroke-width="2.2" stroke-linecap="butt"/>
<rect x="1584.7" y="354" width="26.6" height="35.7" rx="0" stroke="#1a1a1a" stroke-width="1.0" fill="none"/>
<path d="M1584.7 354 L1611.3 389.7 M1611.3 354 L1584.7 389.7" stroke="#1a1a1a" stroke-width="0.7" fill="none" />
<rect x="1584.7" y="392.7" width="26.6" height="35.3" rx="0" stroke="#1a1a1a" stroke-width="1.0" fill="none"/>
<path d="M1584.7 392.7 L1611.3 428 M1611.3 392.7 L1584.7 428" stroke="#1a1a1a" stroke-width="0.7" fill="none" />
<rect x="1586" y="446.7" width="22" height="19.6" rx="0" stroke="#1a1a1a" stroke-width="1.0" fill="none"/>
<path d="M1586 466.3 L1608 446.7" stroke="#1a1a1a" stroke-width="0.7" fill="none" />
<line x1="1580.8" y1="432" x2="1617" y2="432" stroke="#1a1a1a" stroke-width="1.4" stroke-linecap="butt"/>
<rect x="1625" y="357" width="21" height="49" rx="0" stroke="#333" stroke-width="0.7" fill="none" stroke-dasharray="1 0.8"/>
<line x1="1630" y1="358" x2="1630" y2="405" stroke="#1a1a1a" stroke-width="0.9" stroke-linecap="butt"/>
<line x1="1641" y1="358" x2="1641" y2="405" stroke="#1a1a1a" stroke-width="0.9" stroke-linecap="butt"/>
<line x1="1626" y1="374" x2="1645" y2="374" stroke="#1a1a1a" stroke-width="0.9" stroke-linecap="butt"/>
<line x1="1626" y1="390" x2="1645" y2="390" stroke="#1a1a1a" stroke-width="0.9" stroke-linecap="butt"/>
<rect x="1650" y="357" width="21" height="49" rx="0" stroke="#333" stroke-width="0.7" fill="none" stroke-dasharray="1 0.8"/>
<line x1="1655" y1="358" x2="1655" y2="405" stroke="#1a1a1a" stroke-width="0.9" stroke-linecap="butt"/>
<line x1="1666" y1="358" x2="1666" y2="405" stroke="#1a1a1a" stroke-width="0.9" stroke-linecap="butt"/>
<line x1="1651" y1="374" x2="1670" y2="374" stroke="#1a1a1a" stroke-width="0.9" stroke-linecap="butt"/>
<line x1="1651" y1="390" x2="1670" y2="390" stroke="#1a1a1a" stroke-width="0.9" stroke-linecap="butt"/>
<rect x="1677" y="357" width="21" height="49" rx="0" stroke="#333" stroke-width="0.7" fill="none" stroke-dasharray="1 0.8"/>
<line x1="1682" y1="358" x2="1682" y2="405" stroke="#1a1a1a" stroke-width="0.9" stroke-linecap="butt"/>
<line x1="1693" y1="358" x2="1693" y2="405" stroke="#1a1a1a" stroke-width="0.9" stroke-linecap="butt"/>
<line x1="1678" y1="374" x2="1697" y2="374" stroke="#1a1a1a" stroke-width="0.9" stroke-linecap="butt"/>
<line x1="1678" y1="390" x2="1697" y2="390" stroke="#1a1a1a" stroke-width="0.9" stroke-linecap="butt"/>
<line x1="1716" y1="413.0" x2="1730" y2="413.0" stroke="#111" stroke-width="1.4" stroke-dasharray="1.8 1.6" stroke-linecap="butt"/>
<line x1="1716" y1="417.1" x2="1730" y2="417.1" stroke="#111" stroke-width="1.4" stroke-dasharray="1.8 1.6" stroke-linecap="butt"/>
<line x1="1716" y1="421.2" x2="1730" y2="421.2" stroke="#111" stroke-width="1.4" stroke-dasharray="1.8 1.6" stroke-linecap="butt"/>
<line x1="1716" y1="425.3" x2="1730" y2="425.3" stroke="#111" stroke-width="1.4" stroke-dasharray="1.8 1.6" stroke-linecap="butt"/>
<line x1="1716" y1="429.4" x2="1730" y2="429.4" stroke="#111" stroke-width="1.4" stroke-dasharray="1.8 1.6" stroke-linecap="butt"/>
<line x1="1716" y1="433.5" x2="1730" y2="433.5" stroke="#111" stroke-width="1.4" stroke-dasharray="1.8 1.6" stroke-linecap="butt"/>
<line x1="1716" y1="437.6" x2="1730" y2="437.6" stroke="#111" stroke-width="1.4" stroke-dasharray="1.8 1.6" stroke-linecap="butt"/>
<line x1="1716" y1="441.7" x2="1730" y2="441.7" stroke="#111" stroke-width="1.4" stroke-dasharray="1.8 1.6" stroke-linecap="butt"/>
<rect x="1732.5" y="412" width="2.2" height="33" rx="0" stroke="#1a1a1a" stroke-width="0" fill="#111"/>
<rect x="1735" y="413.0" width="10" height="4.1" rx="0" stroke="#111" stroke-width="1.1" fill="none"/>
<rect x="1735" y="417.1" width="10" height="4.1" rx="0" stroke="#111" stroke-width="1.1" fill="none"/>
<rect x="1735" y="421.2" width="10" height="4.1" rx="0" stroke="#111" stroke-width="1.1" fill="none"/>
<rect x="1735" y="425.3" width="10" height="4.1" rx="0" stroke="#111" stroke-width="1.1" fill="none"/>
<rect x="1735" y="429.4" width="10" height="4.1" rx="0" stroke="#111" stroke-width="1.1" fill="none"/>
<rect x="1735" y="433.5" width="10" height="4.1" rx="0" stroke="#111" stroke-width="1.1" fill="none"/>
<rect x="1735" y="437.6" width="10" height="4.1" rx="0" stroke="#111" stroke-width="1.1" fill="none"/>
<line x1="1740" y1="413" x2="1740" y2="441" stroke="#1a1a1a" stroke-width="1.1" stroke-linecap="butt"/>
<line x1="1714" y1="402" x2="1747" y2="402" stroke="#222" stroke-width="0.9" stroke-dasharray="3 2" stroke-linecap="butt"/>
<circle cx="1623" cy="430" r="2.3" stroke="#222" stroke-width="1.2" fill="#777"/>
<circle cx="1646" cy="430" r="2.3" stroke="#222" stroke-width="1.2" fill="#777"/>
<rect x="1653" y="423" width="24" height="18" rx="0" stroke="#333" stroke-width="0.8" fill="none" stroke-dasharray="1.5 1"/>
<rect x="1638" y="469" width="38" height="11" rx="0" stroke="#1a1a1a" stroke-width="1.4" fill="none"/>
<rect x="1645" y="472" width="7" height="4" rx="0" stroke="#1a1a1a" stroke-width="0.9" fill="none"/>
<rect x="1663" y="472" width="7" height="4" rx="0" stroke="#1a1a1a" stroke-width="0.9" fill="none"/>
<path d="M1712 453 H1694 V442 H1680" stroke="#1a1a1a" stroke-width="1.6" fill="none" />
<line x1="1683" y1="418" x2="1695" y2="437" stroke="#1a1a1a" stroke-width="0.7" stroke-linecap="butt"/>
<circle cx="1701" cy="340.5" r="3.6" stroke="#1a1a1a" stroke-width="0.8" fill="#fff"/>
<path d="M1694 340.5 A7 7 0 0 1 1701 333.5" stroke="#1a1a1a" stroke-width="0.7" fill="none" />
<circle cx="1719" cy="340.5" r="3.6" stroke="#1a1a1a" stroke-width="0.8" fill="#fff"/>
<path d="M1712 340.5 A7 7 0 0 1 1719 333.5" stroke="#1a1a1a" stroke-width="0.7" fill="none" />
<circle cx="1638" cy="460" r="3.6" stroke="#1a1a1a" stroke-width="0.8" fill="#fff"/>
<path d="M1631 460 A7 7 0 0 1 1638 453" stroke="#1a1a1a" stroke-width="0.7" fill="none" />
<circle cx="1701" cy="453" r="3.6" stroke="#1a1a1a" stroke-width="0.8" fill="#fff"/>
<path d="M1694 453 A7 7 0 0 1 1701 446" stroke="#1a1a1a" stroke-width="0.7" fill="none" />
<circle cx="1701" cy="481" r="3.6" stroke="#1a1a1a" stroke-width="0.8" fill="#fff"/>
<path d="M1694 481 A7 7 0 0 1 1701 474" stroke="#1a1a1a" stroke-width="0.7" fill="none" />
<circle cx="1719" cy="481" r="3.6" stroke="#1a1a1a" stroke-width="0.8" fill="#fff"/>
<path d="M1712 481 A7 7 0 0 1 1719 474" stroke="#1a1a1a" stroke-width="0.7" fill="none" />
<line x1="1381" y1="326" x2="1421.6" y2="330" stroke="#222" stroke-width="0.9" stroke-dasharray="1.5 1" stroke-linecap="butt"/>
<line x1="1690" y1="330" x2="1731" y2="326" stroke="#222" stroke-width="0.9" stroke-dasharray="1.5 1" stroke-linecap="butt"/>
<line x1="1381" y1="495" x2="1421.6" y2="495" stroke="#222" stroke-width="0.9" stroke-dasharray="1.5 1" stroke-linecap="butt"/>
<line x1="1690" y1="495" x2="1731" y2="495" stroke="#222" stroke-width="0.9" stroke-dasharray="1.5 1" stroke-linecap="butt"/>
<line x1="1358" y1="505" x2="1520" y2="490" stroke="#222" stroke-width="0.8" stroke-dasharray="3 1.5" stroke-linecap="butt"/>
<line x1="1097.3" y1="508.7" x2="1207" y2="517" stroke="#1a1a1a" stroke-width="1.3" stroke-linecap="butt"/>
<path d="M1119.4 617 V522 Q1119.4 514.6 1127 515.2 L1199 520.5 Q1206.5 521.5 1206.5 529 V548 M1206.5 578 V617 M1119.4 562.7 H1206.5" stroke="#1a1a1a" stroke-width="2.6" fill="none" />
<path d="M1119.4 617 V522 Q1119.4 514.6 1127 515.2 L1199 520.5 Q1206.5 521.5 1206.5 529 V548 M1206.5 578 V617 M1119.4 562.7 H1206.5" stroke="#fff" stroke-width="0.75" fill="none" stroke-dasharray="2.2 1.2" />
<line x1="1207" y1="517" x2="1250" y2="521" stroke="#222" stroke-width="0.8" stroke-dasharray="1.2 1.2" stroke-linecap="butt"/>
<path d="M1250.2 617 V556 M1250.2 586 V529 Q1250.2 522 1257 521.5 L1331 527.8 Q1337.7 528.5 1337.7 535 V556 M1337.7 586 V617 M1294 523.8 V617 M1250.2 571 H1337.7" stroke="#1a1a1a" stroke-width="2.6" fill="none" />
<path d="M1250.2 617 V556 M1250.2 586 V529 Q1250.2 522 1257 521.5 L1331 527.8 Q1337.7 528.5 1337.7 535 V556 M1337.7 586 V617 M1294 523.8 V617 M1250.2 571 H1337.7" stroke="#fff" stroke-width="0.75" fill="none" stroke-dasharray="2.2 1.2" />
<line x1="1338" y1="528" x2="1381" y2="531" stroke="#222" stroke-width="0.8" stroke-dasharray="1.2 1.2" stroke-linecap="butt"/>
<path d="M1381.2 617 V556 M1381.2 586 V538 Q1381.2 531 1388 531.2 L1461 537.6 Q1468 538.5 1468 545 V556 M1468 586 V617 M1424.7 534 V617 M1381.2 571 H1468" stroke="#1a1a1a" stroke-width="2.6" fill="none" />
<path d="M1381.2 617 V556 M1381.2 586 V538 Q1381.2 531 1388 531.2 L1461 537.6 Q1468 538.5 1468 545 V556 M1468 586 V617 M1424.7 534 V617 M1381.2 571 H1468" stroke="#fff" stroke-width="0.75" fill="none" stroke-dasharray="2.2 1.2" />
<rect x="1465.7" y="529.1" width="181.3" height="97.9" rx="5" stroke="#222" stroke-width="1.2" fill="none" stroke-dasharray="4 2"/>
<path d="M1490 539 L1556 545 L1621 539 V557.7 H1490 Z" stroke="#1a1a1a" stroke-width="1.6" fill="none" />
<rect x="1494" y="549" width="18" height="8.7" rx="0" stroke="#1a1a1a" stroke-width="1.2" fill="none"/>
<rect x="1516" y="549" width="81" height="8.7" rx="0" stroke="#1a1a1a" stroke-width="1.0" fill="none"/>
<rect x="1600" y="549" width="18" height="8.7" rx="0" stroke="#1a1a1a" stroke-width="1.2" fill="none"/>
<line x1="1520" y1="552" x2="1592" y2="552" stroke="#333" stroke-width="0.7" stroke-dasharray="1.5 1" stroke-linecap="butt"/>
<rect x="1551" y="550" width="10" height="6" rx="0" stroke="#1a1a1a" stroke-width="0.9" fill="none"/>
<rect x="1515" y="564.4" width="80.8" height="26" rx="0" stroke="#333" stroke-width="0.8" fill="none" stroke-dasharray="1.3 1"/>
<rect x="1516" y="570.5" width="80" height="13.4" rx="0" stroke="#1a1a1a" stroke-width="1.1" fill="none"/>
<rect x="1483.9" y="600.5" width="143.1" height="12" rx="0" stroke="#1a1a1a" stroke-width="1.2" fill="none"/>
<rect x="1484.5" y="601" width="11" height="11" rx="0" stroke="#1a1a1a" stroke-width="1.4" fill="none"/>
<rect x="1616" y="601" width="11" height="11" rx="0" stroke="#1a1a1a" stroke-width="1.4" fill="none"/>
<circle cx="1659.7" cy="643.5" r="8.5" stroke="#1a1a1a" stroke-width="0.9" fill="#fff"/>
<line x1="1651.2" y1="643.5" x2="1668.2" y2="643.5" stroke="#1a1a1a" stroke-width="0.8" stroke-linecap="butt"/>
<line x1="1647" y1="627" x2="1653" y2="637" stroke="#1a1a1a" stroke-width="0.8" stroke-linecap="butt"/>
<text x="1659.7" y="641" font-size="3" fill="#333" text-anchor="middle" font-weight="normal" >01</text>
<text x="1652" y="648" font-size="3" fill="#333" text-anchor="middle" font-weight="normal" >A0.01</text>
<text x="1520.8" y="500" font-size="3" fill="#333" text-anchor="middle" font-weight="normal" >1</text>
<text x="1520.8" y="505" font-size="3" fill="#333" text-anchor="middle" font-weight="normal" >A0.02</text>
<path d="M1642.8 617 V586 M1642.8 556 V545 Q1642.8 538 1650 537.6 L1723 531.3 Q1730.5 531 1730.5 538 V556 M1730.5 586 V617 M1686.3 535 V617 M1642.8 571 H1730.5" stroke="#1a1a1a" stroke-width="2.6" fill="none" />
<path d="M1642.8 617 V586 M1642.8 556 V545 Q1642.8 538 1650 537.6 L1723 531.3 Q1730.5 531 1730.5 538 V556 M1730.5 586 V617 M1686.3 535 V617 M1642.8 571 H1730.5" stroke="#fff" stroke-width="0.75" fill="none" stroke-dasharray="2.2 1.2" />
<path d="M1773.4 617 V586 M1773.4 556 V534 Q1773.4 527 1780 526.6 L1854 520.8 Q1861.2 520.5 1861.2 528 V556 M1861.2 586 V617 M1817.3 524 V617 M1773.4 571 H1861.2" stroke="#1a1a1a" stroke-width="2.6" fill="none" />
<path d="M1773.4 617 V586 M1773.4 556 V534 Q1773.4 527 1780 526.6 L1854 520.8 Q1861.2 520.5 1861.2 528 V556 M1861.2 586 V617 M1817.3 524 V617 M1773.4 571 H1861.2" stroke="#fff" stroke-width="0.75" fill="none" stroke-dasharray="2.2 1.2" />
<line x1="1647" y1="537" x2="1863" y2="519.5" stroke="#222" stroke-width="0.8" stroke-dasharray="1.2 1.2" stroke-linecap="butt"/>
<line x1="966.9" y1="214" x2="966.9" y2="323" stroke="#d8c878" stroke-width="1.0" stroke-dasharray="4 2" stroke-linecap="butt"/>
<line x1="1097.9" y1="214" x2="1097.9" y2="313" stroke="#d8c878" stroke-width="1.0" stroke-dasharray="4 2" stroke-linecap="butt"/>
<line x1="1228.5" y1="214" x2="1228.5" y2="344" stroke="#d8c878" stroke-width="1.0" stroke-dasharray="4 2" stroke-linecap="butt"/>
<line x1="1097.9" y1="214" x2="1228.5" y2="214" stroke="#d8c878" stroke-width="1.2" stroke-dasharray="5 2" stroke-linecap="butt"/>
<text x="0" y="3.1" font-size="8.6" fill="#22596a" text-anchor="middle" font-weight="bold" transform="translate(966.9,267) rotate(90)">8 m</text>
<text x="0" y="3.1" font-size="8.6" fill="#22596a" text-anchor="middle" font-weight="bold" transform="translate(1097.9,261) rotate(-90)">7 m</text>
<text x="0" y="3.1" font-size="8.6" fill="#22596a" text-anchor="middle" font-weight="bold" transform="translate(1228.5,259) rotate(-90)">6 m</text>
<text x="0" y="3.1" font-size="8.6" fill="#22596a" text-anchor="middle" font-weight="bold" transform="translate(1228.5,322) rotate(-90)">3 m</text>
<text x="1163.6" y="217.5" font-size="9" fill="#22596a" text-anchor="middle" font-weight="bold" >9 m</text>
<text x="1030" y="320" font-size="9" fill="#22596a" text-anchor="middle" font-weight="bold" >9 m</text>
<text x="1167" y="330.5" font-size="9.5" fill="#22596a" text-anchor="middle" font-weight="bold" >41 m</text>
<text x="999.5" y="401.3" font-size="13.2" fill="#3b3b33" text-anchor="middle" font-weight="normal" >33 sq m</text>
<text x="999.5" y="412.3" font-size="4.6" fill="#a88a45" text-anchor="middle" font-weight="normal" >CONFERENCE 246</text>
<text x="1029.8" y="547" font-size="13.6" fill="#e6dc94" text-anchor="middle" font-weight="normal" >385 cu m</text>
<text x="1032.5" y="559.5" font-size="4.6" fill="#28526a" text-anchor="middle" font-weight="normal" >OPEN OFFICE 244</text>
<text x="1034" y="259.8" font-size="5.4" fill="#111" text-anchor="middle" font-weight="bold" stroke="#111" stroke-width="0.15" textLength="44.2" lengthAdjust="spacingAndGlyphs">OPEN OFFICE 200</text>
<text x="1141.6" y="227" font-size="5.4" fill="#111" text-anchor="middle" font-weight="bold" stroke="#111" stroke-width="0.15" textLength="32.5" lengthAdjust="spacingAndGlyphs">MEETING 201</text>
<text x="1185" y="227" font-size="5.4" fill="#111" text-anchor="middle" font-weight="bold" stroke="#111" stroke-width="0.15" textLength="32.5" lengthAdjust="spacingAndGlyphs">MEETING 203</text>
<text x="1141.6" y="279.8" font-size="5.4" fill="#111" text-anchor="middle" font-weight="bold" stroke="#111" stroke-width="0.15" textLength="32.5" lengthAdjust="spacingAndGlyphs">MEETING 202</text>
<text x="1185" y="279.8" font-size="5.4" fill="#111" text-anchor="middle" font-weight="bold" stroke="#111" stroke-width="0.15" textLength="32.5" lengthAdjust="spacingAndGlyphs">MEETING 204</text>
<text x="1295" y="229" font-size="5.4" fill="#111" text-anchor="middle" font-weight="bold" stroke="#111" stroke-width="0.15" textLength="29.5" lengthAdjust="spacingAndGlyphs">OFFICE 205</text>
<text x="1295" y="276.5" font-size="5.4" fill="#111" text-anchor="middle" font-weight="bold" stroke="#111" stroke-width="0.15" textLength="29.5" lengthAdjust="spacingAndGlyphs">OFFICE 206</text>
<text x="1417.5" y="249" font-size="5.4" fill="#111" text-anchor="middle" font-weight="bold" stroke="#111" stroke-width="0.15" textLength="41.3" lengthAdjust="spacingAndGlyphs">CONFERENCE 207</text>
<text x="1522.7" y="250.5" font-size="5.4" fill="#111" text-anchor="middle" font-weight="bold" stroke="#111" stroke-width="0.15" textLength="32.5" lengthAdjust="spacingAndGlyphs">MEETING 208</text>
<text x="1588" y="250.5" font-size="5.4" fill="#111" text-anchor="middle" font-weight="bold" stroke="#111" stroke-width="0.15" textLength="32.5" lengthAdjust="spacingAndGlyphs">MEETING 209</text>
<text x="1654" y="250.5" font-size="5.4" fill="#111" text-anchor="middle" font-weight="bold" stroke="#111" stroke-width="0.15" textLength="32.5" lengthAdjust="spacingAndGlyphs">MEETING 210</text>
<text x="1731" y="245" font-size="5.4" fill="#111" text-anchor="middle" font-weight="bold" stroke="#111" stroke-width="0.15" textLength="41.3" lengthAdjust="spacingAndGlyphs">CONFERENCE 211</text>
<text x="1815.5" y="229" font-size="5.4" fill="#111" text-anchor="middle" font-weight="bold" stroke="#111" stroke-width="0.15" textLength="29.5" lengthAdjust="spacingAndGlyphs">OFFICE 212</text>
<text x="1815.5" y="277" font-size="5.4" fill="#111" text-anchor="middle" font-weight="bold" stroke="#111" stroke-width="0.15" textLength="29.5" lengthAdjust="spacingAndGlyphs">OFFICE 213</text>
<text x="1557" y="311" font-size="5.4" fill="#111" text-anchor="middle" font-weight="bold" stroke="#111" stroke-width="0.15" textLength="38.4" lengthAdjust="spacingAndGlyphs">RECEPTION 255</text>
<text x="997.7" y="344" font-size="5.4" fill="#111" text-anchor="middle" font-weight="bold" stroke="#111" stroke-width="0.15" textLength="32.5" lengthAdjust="spacingAndGlyphs">MEETING 247</text>
<text x="997.7" y="482" font-size="5.4" fill="#111" text-anchor="middle" font-weight="bold" stroke="#111" stroke-width="0.15" textLength="32.5" lengthAdjust="spacingAndGlyphs">MEETING 245</text>
<text x="1173.7" y="410.7" font-size="5.4" fill="#111" text-anchor="middle" font-weight="bold" stroke="#111" stroke-width="0.15" textLength="44.2" lengthAdjust="spacingAndGlyphs">OPEN OFFICE 248</text>
<text x="1331" y="382.5" font-size="5.4" fill="#111" text-anchor="middle" font-weight="bold" stroke="#111" stroke-width="0.15" textLength="29.5" lengthAdjust="spacingAndGlyphs">OFFICE 249</text>
<text x="1331" y="447.8" font-size="5.4" fill="#111" text-anchor="middle" font-weight="bold" stroke="#111" stroke-width="0.15" textLength="23.6" lengthAdjust="spacingAndGlyphs">COPY 250</text>
<text x="1382.5" y="365" font-size="5.4" fill="#111" text-anchor="middle" font-weight="bold" stroke="#111" stroke-width="0.15" textLength="26.6" lengthAdjust="spacingAndGlyphs">STAIR 251</text>
<text x="1425" y="360" font-size="5.4" fill="#111" text-anchor="middle" font-weight="bold" stroke="#111" stroke-width="0.15" textLength="29.5" lengthAdjust="spacingAndGlyphs">ELECTRICAL</text>
<text x="1425" y="367" font-size="5.4" fill="#111" text-anchor="middle" font-weight="bold" stroke="#111" stroke-width="0.15" textLength="8.9" lengthAdjust="spacingAndGlyphs">253</text>
<text x="1437.5" y="399" font-size="5.4" fill="#111" text-anchor="middle" font-weight="bold" stroke="#111" stroke-width="0.15" textLength="35.4" lengthAdjust="spacingAndGlyphs">STORAGE 253A</text>
<text x="1424" y="414.6" font-size="5.4" fill="#111" text-anchor="middle" font-weight="bold" stroke="#111" stroke-width="0.15" textLength="35.4" lengthAdjust="spacingAndGlyphs">STORAGE 254A</text>
<text x="1441.5" y="463.5" font-size="5.4" fill="#111" text-anchor="middle" font-weight="bold" stroke="#111" stroke-width="0.15" textLength="41.3" lengthAdjust="spacingAndGlyphs">WOMEN'S RR 254</text>
<text x="1557" y="402" font-size="5.4" fill="#111" text-anchor="middle" font-weight="bold" stroke="#111" stroke-width="0.15" textLength="26.6" lengthAdjust="spacingAndGlyphs">LOBBY 256</text>
<text x="1651" y="349" font-size="5.4" fill="#111" text-anchor="middle" font-weight="bold" stroke="#111" stroke-width="0.15" textLength="29.5" lengthAdjust="spacingAndGlyphs">SERVER 257</text>
<text x="1667.5" y="417.5" font-size="5.4" fill="#111" text-anchor="middle" font-weight="bold" stroke="#111" stroke-width="0.15" textLength="35.4" lengthAdjust="spacingAndGlyphs">STORAGE 258A</text>
<text x="1669" y="463" font-size="5.4" fill="#111" text-anchor="middle" font-weight="bold" stroke="#111" stroke-width="0.15" textLength="35.4" lengthAdjust="spacingAndGlyphs">MEN'S RR 258</text>
<text x="1729.5" y="463" font-size="5.4" fill="#111" text-anchor="middle" font-weight="bold" stroke="#111" stroke-width="0.15" textLength="26.6" lengthAdjust="spacingAndGlyphs">STAIR 259</text>
<text x="1779.5" y="380.6" font-size="5.4" fill="#111" text-anchor="middle" font-weight="bold" stroke="#111" stroke-width="0.15" textLength="29.5" lengthAdjust="spacingAndGlyphs">OFFICE 261</text>
<text x="1780" y="440.5" font-size="5.4" fill="#111" text-anchor="middle" font-weight="bold" stroke="#111" stroke-width="0.15" textLength="23.6" lengthAdjust="spacingAndGlyphs">COPY 262</text>
<text x="1163" y="540.4" font-size="5.4" fill="#111" text-anchor="middle" font-weight="bold" stroke="#111" stroke-width="0.15" textLength="29.5" lengthAdjust="spacingAndGlyphs">OFFICE 242</text>
<text x="1163" y="587" font-size="5.4" fill="#111" text-anchor="middle" font-weight="bold" stroke="#111" stroke-width="0.15" textLength="29.5" lengthAdjust="spacingAndGlyphs">OFFICE 243</text>
<text x="1272" y="547.5" font-size="5.4" fill="#111" text-anchor="middle" font-weight="bold" stroke="#111" stroke-width="0.15" textLength="29.5" lengthAdjust="spacingAndGlyphs">OFFICE 240</text>
<text x="1316" y="547.5" font-size="5.4" fill="#111" text-anchor="middle" font-weight="bold" stroke="#111" stroke-width="0.15" textLength="29.5" lengthAdjust="spacingAndGlyphs">OFFICE 238</text>
<text x="1272" y="594.6" font-size="5.4" fill="#111" text-anchor="middle" font-weight="bold" stroke="#111" stroke-width="0.15" textLength="29.5" lengthAdjust="spacingAndGlyphs">OFFICE 241</text>
<text x="1316" y="594.6" font-size="5.4" fill="#111" text-anchor="middle" font-weight="bold" stroke="#111" stroke-width="0.15" textLength="29.5" lengthAdjust="spacingAndGlyphs">OFFICE 239</text>
<text x="1403.5" y="554" font-size="5.4" fill="#111" text-anchor="middle" font-weight="bold" stroke="#111" stroke-width="0.15" textLength="29.5" lengthAdjust="spacingAndGlyphs">OFFICE 236</text>
<text x="1446" y="554" font-size="5.4" fill="#111" text-anchor="middle" font-weight="bold" stroke="#111" stroke-width="0.15" textLength="32.5" lengthAdjust="spacingAndGlyphs">MEETING 234</text>
<text x="1403.5" y="593" font-size="5.4" fill="#111" text-anchor="middle" font-weight="bold" stroke="#111" stroke-width="0.15" textLength="29.5" lengthAdjust="spacingAndGlyphs">OFFICE 237</text>
<text x="1446" y="593" font-size="5.4" fill="#111" text-anchor="middle" font-weight="bold" stroke="#111" stroke-width="0.15" textLength="32.5" lengthAdjust="spacingAndGlyphs">MEETING 235</text>
<text x="1557" y="579.5" font-size="5.4" fill="#111" text-anchor="middle" font-weight="bold" stroke="#111" stroke-width="0.15" textLength="41.3" lengthAdjust="spacingAndGlyphs">BREAK ROOM 233</text>
<text x="1666" y="555" font-size="5.4" fill="#111" text-anchor="middle" font-weight="bold" stroke="#111" stroke-width="0.15" textLength="32.5" lengthAdjust="spacingAndGlyphs">MEETING 231</text>
<text x="1707" y="555" font-size="5.4" fill="#111" text-anchor="middle" font-weight="bold" stroke="#111" stroke-width="0.15" textLength="29.5" lengthAdjust="spacingAndGlyphs">OFFICE 229</text>
<text x="1666" y="599" font-size="5.4" fill="#111" text-anchor="middle" font-weight="bold" stroke="#111" stroke-width="0.15" textLength="32.5" lengthAdjust="spacingAndGlyphs">MEETING 232</text>
<text x="1707" y="599" font-size="5.4" fill="#111" text-anchor="middle" font-weight="bold" stroke="#111" stroke-width="0.15" textLength="29.5" lengthAdjust="spacingAndGlyphs">OFFICE 230</text>
<text x="1795.5" y="548" font-size="5.4" fill="#111" text-anchor="middle" font-weight="bold" stroke="#111" stroke-width="0.15" textLength="29.5" lengthAdjust="spacingAndGlyphs">OFFICE 227</text>
<text x="1841" y="548" font-size="5.4" fill="#111" text-anchor="middle" font-weight="bold" stroke="#111" stroke-width="0.15" textLength="29.5" lengthAdjust="spacingAndGlyphs">OFFICE 225</text>
<text x="1795.5" y="596" font-size="5.4" fill="#111" text-anchor="middle" font-weight="bold" stroke="#111" stroke-width="0.15" textLength="29.5" lengthAdjust="spacingAndGlyphs">OFFICE 228</text>
<text x="1841" y="596" font-size="5.4" fill="#111" text-anchor="middle" font-weight="bold" stroke="#111" stroke-width="0.15" textLength="29.5" lengthAdjust="spacingAndGlyphs">OFFICE 226</text>
<text x="0" y="0" font-size="5.4" fill="#1c1c1c" text-anchor="middle" font-weight="bold" transform="translate(1384,451) rotate(-90)">MOTHER'S RM 252</text>
<text x="0" y="0" font-size="5.4" fill="#1c1c1c" text-anchor="middle" font-weight="bold" transform="translate(1731,370) rotate(-90)">STORAGE 260</text>
<text x="0" y="0" font-size="4" fill="#333" text-anchor="middle" font-weight="normal" transform="translate(1487,380) rotate(90)">VOID</text>
<line x1="888.3" y1="838.4" x2="1863" y2="838.4" stroke="#1a1a1a" stroke-width="1.3" stroke-linecap="butt"/>
<line x1="888.3" y1="931" x2="1863" y2="931" stroke="#1a1a1a" stroke-width="1.3" stroke-linecap="butt"/>
<line x1="1237.1" y1="838.4" x2="1237.1" y2="931" stroke="#1a1a1a" stroke-width="1.2" stroke-linecap="butt"/>
<line x1="1349.5" y1="838.4" x2="1349.5" y2="931" stroke="#1a1a1a" stroke-width="1.2" stroke-linecap="butt"/>
<line x1="1462" y1="838.4" x2="1462" y2="931" stroke="#1a1a1a" stroke-width="1.2" stroke-linecap="butt"/>
<line x1="1574.5" y1="838.4" x2="1574.5" y2="931" stroke="#1a1a1a" stroke-width="1.2" stroke-linecap="butt"/>
<line x1="1687.1" y1="838.4" x2="1687.1" y2="931" stroke="#1a1a1a" stroke-width="1.2" stroke-linecap="butt"/>
<line x1="1799.4" y1="838.4" x2="1799.4" y2="931" stroke="#1a1a1a" stroke-width="1.2" stroke-linecap="butt"/>
<rect x="893.4" y="847.3" width="139.3" height="75.2" rx="0" stroke="#8fb0b2" stroke-width="1.2" fill="none"/>
<rect x="896.5" y="850.3" width="133.1" height="69.2" rx="0" stroke="#a9c2c2" stroke-width="0.8" fill="none"/>
<text x="911.3" y="877.8" font-size="14.8" fill="#3e6a6e" text-anchor="start" font-weight="bold" textLength="121" lengthAdjust="spacing" transform="translate(911.3 0) scale(0.86 1) translate(-911.3 0)">BRIGHTER</text>
<text x="911.3" y="893.8" font-size="14.8" fill="#3e6a6e" text-anchor="start" font-weight="bold" textLength="121" lengthAdjust="spacing" transform="translate(911.3 0) scale(0.86 1) translate(-911.3 0)">GRAPHICS</text>
<text x="963.4" y="904.3" font-size="3.6" fill="#5a7a7a" text-anchor="middle" font-weight="bold" textLength="83" lengthAdjust="spacingAndGlyphs">BUILDING CONSTRUCTION SINCE 2001</text>
<path d="M1046 861 H1050.5 V893 H1076.5 V865.5 H1053.5 V861 H1081 V897.5 H1046 Z" stroke="#1a1a1a" stroke-width="0" fill="#1e88d0" />
<rect x="1057" y="873" width="11.5" height="11.4" rx="0" stroke="#1a1a1a" stroke-width="0" fill="#1e88d0"/>
<text x="1090.4" y="891.5" font-size="34.5" fill="#1e88d0" text-anchor="start" font-weight="bold" textLength="135" lengthAdjust="spacingAndGlyphs">BLUEBEAM</text>
<text x="1090.4" y="905" font-size="8.6" fill="#333" text-anchor="start" font-weight="bold" textLength="61" lengthAdjust="spacingAndGlyphs">Sapphire Partner</text>
<text x="1244" y="851" font-size="9.6" fill="#1a1a1a" text-anchor="start" font-weight="bold" textLength="100" lengthAdjust="spacingAndGlyphs">CAPTURE ENGINEERS</text>
<text x="1244" y="863.1" font-size="9.2" fill="#1a1a1a" text-anchor="start" font-weight="normal" >Mechanical</text>
<text x="1244" y="873.4" font-size="9.2" fill="#1a1a1a" text-anchor="start" font-weight="normal" >Electrical</text>
<text x="1244" y="883.2" font-size="9.2" fill="#1a1a1a" text-anchor="start" font-weight="normal" >Plumbing</text>
<text x="1244" y="908.8" font-size="9.2" fill="#1a1a1a" text-anchor="start" font-weight="normal" >1234 Miller St.</text>
<text x="1244" y="918.9" font-size="9.2" fill="#1a1a1a" text-anchor="start" font-weight="normal" textLength="93.5" lengthAdjust="spacingAndGlyphs">Manchester, NH 06930</text>
<text x="1360" y="851" font-size="9.6" fill="#1a1a1a" text-anchor="start" font-weight="bold" textLength="86.7" lengthAdjust="spacingAndGlyphs">REVU ARCHITECTS</text>
<text x="1360" y="908.8" font-size="9.2" fill="#1a1a1a" text-anchor="start" font-weight="normal" textLength="70" lengthAdjust="spacingAndGlyphs">5555 N. Broad St</text>
<text x="1360" y="918.9" font-size="9.2" fill="#1a1a1a" text-anchor="start" font-weight="normal" textLength="84" lengthAdjust="spacingAndGlyphs">Pasadena CA 91101</text>
<text x="1471" y="851" font-size="9.6" fill="#1a1a1a" text-anchor="start" font-weight="bold" textLength="80.2" lengthAdjust="spacingAndGlyphs">OFFICE BUILDING</text>
<text x="1471" y="870.5" font-size="9.2" fill="#1a1a1a" text-anchor="start" font-weight="normal" textLength="78" lengthAdjust="spacingAndGlyphs">Project No: 323232</text>
<text x="1472" y="898.8" font-size="9.2" fill="#1a1a1a" text-anchor="start" font-weight="normal" textLength="66" lengthAdjust="spacingAndGlyphs">Project Address:</text>
<text x="1472" y="908.8" font-size="9.2" fill="#1a1a1a" text-anchor="start" font-weight="normal" textLength="71" lengthAdjust="spacingAndGlyphs">123 Schonsett St</text>
<text x="1472" y="918.9" font-size="9.2" fill="#1a1a1a" text-anchor="start" font-weight="normal" textLength="72" lengthAdjust="spacingAndGlyphs">Chicago, IL 60601</text>
<text x="1583.7" y="848.6" font-size="6.2" fill="#444" text-anchor="start" font-weight="normal" textLength="94.5" lengthAdjust="spacingAndGlyphs">THIS DRAWING IS INTENDED FOR</text>
<text x="1583.7" y="855.35" font-size="6.2" fill="#444" text-anchor="start" font-weight="normal" textLength="85" lengthAdjust="spacingAndGlyphs">DEMONSTRATION PURPOSES</text>
<text x="1583.7" y="862.1" font-size="6.2" fill="#444" text-anchor="start" font-weight="normal" textLength="72" lengthAdjust="spacingAndGlyphs">ONLY.  DO NOT USE THIS</text>
<text x="1583.7" y="868.85" font-size="6.2" fill="#444" text-anchor="start" font-weight="normal" textLength="77" lengthAdjust="spacingAndGlyphs">DRAWING FOR ANY OTHER</text>
<text x="1583.7" y="875.6" font-size="6.2" fill="#444" text-anchor="start" font-weight="normal" textLength="70" lengthAdjust="spacingAndGlyphs">PURPOSE WITHOUT THE</text>
<text x="1583.7" y="882.35" font-size="6.2" fill="#444" text-anchor="start" font-weight="normal" textLength="93" lengthAdjust="spacingAndGlyphs">EXPRESS WRITTEN PERMISSION</text>
<text x="1583.7" y="889.1" font-size="6.2" fill="#444" text-anchor="start" font-weight="normal" textLength="55" lengthAdjust="spacingAndGlyphs">OF BLUEBEAM, INC.</text>
<text x="1696" y="849.5" font-size="5" fill="#444" text-anchor="start" font-weight="normal" >DATE</text>
<text x="1792.6" y="849.5" font-size="5" fill="#444" text-anchor="end" font-weight="normal" >03/04/2018</text>
<text x="1696" y="856.5" font-size="5" fill="#444" text-anchor="start" font-weight="normal" >ISSUED FOR:</text>
<text x="1792.6" y="856.5" font-size="5" fill="#444" text-anchor="end" font-weight="normal" >INTERNAL REVIEW</text>
<text x="1696" y="869.5" font-size="5" fill="#444" text-anchor="start" font-weight="normal" >PROJECT</text>
<text x="1792.6" y="869.5" font-size="5" fill="#444" text-anchor="end" font-weight="normal" >3232</text>
<text x="1696" y="876" font-size="5" fill="#444" text-anchor="start" font-weight="normal" >DRAWN BY:</text>
<text x="1792.6" y="876" font-size="5" fill="#444" text-anchor="end" font-weight="normal" >Author</text>
<text x="1696" y="882.5" font-size="5" fill="#444" text-anchor="start" font-weight="normal" >CHECKED BY:</text>
<text x="1792.6" y="882.5" font-size="5" fill="#444" text-anchor="end" font-weight="normal" >Checker</text>
<text x="1696" y="889" font-size="5" fill="#444" text-anchor="start" font-weight="normal" >APPROVED BY:</text>
<text x="1792.6" y="889" font-size="5" fill="#444" text-anchor="end" font-weight="normal" >Approver</text>
<line x1="1696" y1="851.2" x2="1792.6" y2="851.2" stroke="#333" stroke-width="0.8" stroke-linecap="butt"/>
<line x1="1696" y1="864.6" x2="1792.6" y2="864.6" stroke="#333" stroke-width="1.2" stroke-linecap="butt"/>
<line x1="1696" y1="870.9" x2="1792.6" y2="870.9" stroke="#333" stroke-width="0.8" stroke-linecap="butt"/>
<line x1="1696" y1="877.3" x2="1792.6" y2="877.3" stroke="#333" stroke-width="0.8" stroke-linecap="butt"/>
<line x1="1696" y1="883.8" x2="1792.6" y2="883.8" stroke="#333" stroke-width="0.8" stroke-linecap="butt"/>
<line x1="1696" y1="863.5" x2="1792.6" y2="863.5" stroke="#333" stroke-width="0.8" stroke-linecap="butt"/>
<rect x="1696" y="890.7" width="96.6" height="5.7" rx="0" stroke="#333" stroke-width="0.9" fill="none"/>
<line x1="1720.2" y1="890.7" x2="1720.2" y2="896.4" stroke="#1a1a1a" stroke-width="0.8" stroke-linecap="butt"/>
<line x1="1744.5" y1="890.7" x2="1744.5" y2="896.4" stroke="#1a1a1a" stroke-width="0.8" stroke-linecap="butt"/>
<text x="1708" y="895.5" font-size="4" fill="#444" text-anchor="middle" font-weight="normal" >#</text>
<text x="1732" y="895.5" font-size="4" fill="#444" text-anchor="middle" font-weight="normal" >DATE</text>
<text x="1768" y="895.5" font-size="4" fill="#444" text-anchor="middle" font-weight="normal" >DESCRIPTION</text>
<text x="1829" y="876.7" font-size="11.3" fill="#111" text-anchor="start" font-weight="bold" >NOT FOR</text>
<text x="1807" y="890.7" font-size="11.3" fill="#111" text-anchor="start" font-weight="bold" >CONSTRUCTION</text>
</g></svg>
<div class="a" style="left:1872px;top:285px;width:2.6px;height:625px;background:#9a9a9a;"></div>
<div class="a" style="left:1888.0px;top:76px;width:2px;height:2px;background:#8a8a8a;"></div>
<div class="a" style="left:1891.7px;top:76px;width:2px;height:2px;background:#8a8a8a;"></div>
<div class="a" style="left:1895.4px;top:76px;width:2px;height:2px;background:#8a8a8a;"></div>
<div class="a" style="left:1899.1px;top:76px;width:2px;height:2px;background:#8a8a8a;"></div>
<div class="a" style="left:1902.8px;top:76px;width:2px;height:2px;background:#8a8a8a;"></div>
<div class="a" style="left:1906.5px;top:76px;width:2px;height:2px;background:#8a8a8a;"></div>
<div class="a" style="left:1910.2px;top:76px;width:2px;height:2px;background:#8a8a8a;"></div>
<div class="a" style="left:1913.9px;top:76px;width:2px;height:2px;background:#8a8a8a;"></div>
<svg style="left:1884px;top:71px" width="35" height="450"><path d="M8.4 37.4L25.8 20.4" fill="none" stroke="#f0f0f0" stroke-width="1.4"/><path d="M8.4 73.5L22 59.8" fill="none" stroke="#f0f0f0" stroke-width="1.4"/><path d="M25.8 56.6L17.5 58.5L23.9 64.9Z" fill="#f0f0f0"/><path d="M8.4 109.6Q10 94 25.8 92" fill="none" stroke="#f0f0f0" stroke-width="1.4"/><path d="M8.4 145.7L11 134L16 137L18.5 129L22 132L25.8 127.5" fill="none" stroke="#f0f0f0" stroke-width="1.4"/><path d="M8.4 169.4V176 M25.8 169.4V176 M8.4 172.7H25.8" fill="none" stroke="#f0f0f0" stroke-width="1.4"/><rect x="8.4" y="202" width="17.4" height="13.7" fill="none" stroke="#f0f0f0" stroke-width="1.4"/><ellipse cx="17.1" cy="244.8" rx="8.7" ry="6.8" fill="none" stroke="#f0f0f0" stroke-width="1.4"/><path d="M8.4 272H24L16.5 280L25.8 289.4H8.4Z" fill="none" stroke="#f0f0f0" stroke-width="1.4"/></svg>
<svg style="left:1891px;top:378px" width="19" height="20"><rect x="4" y="0" width="1.2" height="2.5" fill="#4a4470"/><rect x="7" y="0" width="1.2" height="2.5" fill="#4a4470"/><rect x="10" y="0" width="1.2" height="2.5" fill="#4a4470"/><rect x="13" y="0" width="1.2" height="2.5" fill="#4a4470"/><rect x="16" y="0" width="1.2" height="2.5" fill="#4a4470"/><rect x="0" y="4" width="2.5" height="1.2" fill="#4a4470"/><rect x="0" y="7" width="2.5" height="1.2" fill="#4a4470"/><rect x="0" y="10" width="2.5" height="1.2" fill="#4a4470"/><rect x="0" y="13" width="2.5" height="1.2" fill="#4a4470"/><rect x="0" y="16" width="2.5" height="1.2" fill="#4a4470"/><rect x="0" y="19" width="2.5" height="1.2" fill="#4a4470"/><rect x="2.5" y="2.5" width="16.5" height="1.1" fill="#6c6496"/><rect x="2.5" y="2.5" width="1.1" height="17.5" fill="#6c6496"/></svg>
<svg style="left:1891px;top:414px" width="19" height="20"><rect x="4" y="0" width="1.2" height="2.5" fill="#4a4470"/><rect x="7" y="0" width="1.2" height="2.5" fill="#4a4470"/><rect x="10" y="0" width="1.2" height="2.5" fill="#4a4470"/><rect x="13" y="0" width="1.2" height="2.5" fill="#4a4470"/><rect x="16" y="0" width="1.2" height="2.5" fill="#4a4470"/><rect x="0" y="4" width="2.5" height="1.2" fill="#4a4470"/><rect x="0" y="7" width="2.5" height="1.2" fill="#4a4470"/><rect x="0" y="10" width="2.5" height="1.2" fill="#4a4470"/><rect x="0" y="13" width="2.5" height="1.2" fill="#4a4470"/><rect x="0" y="16" width="2.5" height="1.2" fill="#4a4470"/><rect x="0" y="19" width="2.5" height="1.2" fill="#4a4470"/><rect x="2.5" y="2.5" width="16.5" height="1.1" fill="#6c6496"/><rect x="2.5" y="2.5" width="1.1" height="17.5" fill="#6c6496"/></svg>
<svg style="left:1891px;top:448px" width="19" height="20"><rect x="4" y="0" width="1.2" height="2.5" fill="#4a4470"/><rect x="7" y="0" width="1.2" height="2.5" fill="#4a4470"/><rect x="10" y="0" width="1.2" height="2.5" fill="#4a4470"/><rect x="13" y="0" width="1.2" height="2.5" fill="#4a4470"/><rect x="16" y="0" width="1.2" height="2.5" fill="#4a4470"/><rect x="0" y="4" width="2.5" height="1.2" fill="#4a4470"/><rect x="0" y="7" width="2.5" height="1.2" fill="#4a4470"/><rect x="0" y="10" width="2.5" height="1.2" fill="#4a4470"/><rect x="0" y="13" width="2.5" height="1.2" fill="#4a4470"/><rect x="0" y="16" width="2.5" height="1.2" fill="#4a4470"/><rect x="0" y="19" width="2.5" height="1.2" fill="#4a4470"/><rect x="2.5" y="2.5" width="16.5" height="1.1" fill="#6c6496"/><rect x="2.5" y="2.5" width="1.1" height="17.5" fill="#6c6496"/></svg>
<svg style="left:1891px;top:485px" width="19" height="20"><rect x="4" y="0" width="1.2" height="2.5" fill="#4a4470"/><rect x="7" y="0" width="1.2" height="2.5" fill="#4a4470"/><rect x="10" y="0" width="1.2" height="2.5" fill="#4a4470"/><rect x="13" y="0" width="1.2" height="2.5" fill="#4a4470"/><rect x="16" y="0" width="1.2" height="2.5" fill="#4a4470"/><rect x="0" y="4" width="2.5" height="1.2" fill="#4a4470"/><rect x="0" y="7" width="2.5" height="1.2" fill="#4a4470"/><rect x="0" y="10" width="2.5" height="1.2" fill="#4a4470"/><rect x="0" y="13" width="2.5" height="1.2" fill="#4a4470"/><rect x="0" y="16" width="2.5" height="1.2" fill="#4a4470"/><rect x="0" y="19" width="2.5" height="1.2" fill="#4a4470"/><rect x="2.5" y="2.5" width="16.5" height="1.1" fill="#6c6496"/><rect x="2.5" y="2.5" width="1.1" height="17.5" fill="#6c6496"/></svg>
<svg style="left:1894px;top:383px" width="17" height="16"><path d="M2.5 9L8 3H14.5V13.5H2.5Z" fill="none" stroke="#f2f2f2" stroke-width="1.3"/><rect x="0.5" y="7" width="4" height="4" fill="#f2f2f2"/><rect x="6" y="1" width="4" height="4" fill="#f2f2f2"/><rect x="12.5" y="1" width="4" height="4" fill="#f2f2f2"/><rect x="12.5" y="11.5" width="4" height="4" fill="#f2f2f2"/><rect x="0.5" y="11.5" width="4" height="4" fill="#f2f2f2"/></svg>
<svg style="left:1896px;top:419px" width="15" height="15"><path d="M1 14V7.5L7 1H14V14Z" fill="none" stroke="#f2f2f2" stroke-width="1.3"/></svg>
<svg style="left:1895px;top:455px" width="17" height="11"><path d="M1 1V10 M16 1V10 M2 5.5H15" fill="none" stroke="#f2f2f2" stroke-width="1.3"/><path d="M2 5.5L5.5 3V8Z M15 5.5L11.5 3V8Z" fill="#f2f2f2"/></svg>
<svg style="left:1895px;top:491px" width="17" height="12"><path d="M4 1V11 M7.5 1V11 M11 1V11 M14.5 1V11" fill="none" stroke="#f2f2f2" stroke-width="1.3"/><path d="M0.5 10L16.5 3" fill="none" stroke="#f2f2f2" stroke-width="1.3"/></svg>
<svg style="left:617px;top:942px" width="1267" height="36"><rect x="9" y="11" width="17" height="16" fill="none" stroke="#6a6a6a" stroke-width="1.4"/><rect x="45" y="11" width="17" height="16" fill="none" stroke="#f0f0f0" stroke-width="1.4"/><path d="M53.5 11V27" fill="none" stroke="#f0f0f0" stroke-width="1.4"/><rect x="81" y="11" width="17" height="16" fill="none" stroke="#f0f0f0" stroke-width="1.4"/><path d="M81 19H98" fill="none" stroke="#f0f0f0" stroke-width="1.4"/><path d="M111.3 10V28" stroke="#777" stroke-width="1.3"/><path d="M125 9H133L139 15V29H125Z M133 9V15H139 M132 15V26 M126.5 20.5H137.5" fill="none" stroke="#f0f0f0" stroke-width="1.4" stroke-width="1.2"/><path d="M132 14L130 16.5H134Z M132 27L130 24.5H134Z M126 20.5L128.5 18.5V22.5Z M138 20.5L135.5 18.5V22.5Z" fill="#f0f0f0"/><path d="M160 9V12 M175.5 9V12 M160 10.5H175.5 M161 27V16H170L174.5 20.5V27 M170 16V20.5H174.5" fill="none" stroke="#f0f0f0" stroke-width="1.4" stroke-width="1.2"/><path d="M160 25V30 M175.5 25V30 M161 27.5H174.5" fill="none" stroke="#f0f0f0" stroke-width="1.4" stroke-width="1.2"/></svg>
<div class="a" style="left:847px;top:943px;width:38px;height:35px;background:#1b5a8c;box-shadow:0 0 4px 2px rgba(27,90,140,.5)"></div>
<svg style="left:856px;top:950px" width="22" height="22" viewBox="0 0 22 22"><path d="M6 19.5Q3 16 2 12.5Q1.5 11 3 10.8Q4.5 10.8 6 13V5Q6 3.5 7.3 3.5Q8.6 3.5 8.6 5V10V3.2Q8.6 1.8 10 1.8Q11.4 1.8 11.4 3.2V10V4Q11.4 2.7 12.7 2.7Q14 2.7 14 4V10.5V6.5Q14 5.2 15.3 5.2Q16.6 5.2 16.6 6.5V13Q16.6 17 14.5 19.5Z" fill="none" stroke="#e6f3ff" stroke-width="1.5"/></svg>
<svg style="left:896px;top:952px" width="14" height="19"><path d="M1 1V15L4.5 11.5L7.5 17.5L10 16.5L7 10.5H12.5Z" fill="none" stroke="#f0f0f0" stroke-width="1.4" stroke-width="1.3"/></svg>
<svg style="left:929px;top:952px" width="17" height="19"><path d="M1 1H8 M1 18H8 M4.5 1V18" fill="none" stroke="#f0f0f0" stroke-width="1.4" stroke-width="1.3"/><path d="M7.5 13.5L10.5 4.5L13.5 13.5 M8.5 10.5H12.5" fill="none" stroke="#f0f0f0" stroke-width="1.4" stroke-width="1.5"/></svg>
<svg style="left:963px;top:951px" width="21" height="20"><circle cx="8" cy="7.5" r="6.5" fill="none" stroke="#f0f0f0" stroke-width="1.4" stroke-width="1.3"/><path d="M12.5 12L19.5 19 M8 4V8.5 M5.8 6.2H10.2 M5.8 9.8H10.2" fill="none" stroke="#f0f0f0" stroke-width="1.4" stroke-width="1.3"/></svg>
<svg style="left:1003px;top:954px" width="13" height="14"><path d="M1.5 1V13" fill="none" stroke="#6a6a6a" stroke-width="1.4"/><path d="M11.5 1.5L4 7L11.5 12.5Z" fill="none" stroke="#6a6a6a" stroke-width="1.4"/></svg>
<svg style="left:1041px;top:955px" width="10" height="12"><path d="M8 1.5L2 6L8 10.5Z" fill="none" stroke="#6a6a6a" stroke-width="1.4"/></svg>
<div class="a" style="left:1065px;top:948px;width:307px;height:26px;border:1px solid #5a5a5a;border-radius:3px"></div>
<div class="t" style="left:1158px;top:952.0px;font-size:15px;color:#e8e8e8;">Floor Plan (1 of 1)</div>
<svg style="left:1385px;top:955px" width="10" height="12"><path d="M2 1.5L8 6L2 10.5Z" fill="none" stroke="#6a6a6a" stroke-width="1.4"/></svg>
<svg style="left:1419px;top:954px" width="13" height="14"><path d="M11.5 1V13" fill="none" stroke="#6a6a6a" stroke-width="1.4"/><path d="M1.5 1.5L9 7L1.5 12.5Z" fill="none" stroke="#6a6a6a" stroke-width="1.4"/></svg>
<div class="a" style="left:1446px;top:951px;width:1.3px;height:19px;background:#777;"></div>
<svg style="left:1458px;top:951px" width="20" height="20"><circle cx="10" cy="10" r="8.8" fill="none" stroke="#f0f0f0" stroke-width="1.4" stroke-width="1.3"/><path d="M12.5 5.5L6.5 10L12.5 14.5Z" fill="none" stroke="#f0f0f0" stroke-width="1.4" stroke-width="1.3"/></svg>
<svg style="left:1493px;top:951px" width="20" height="20"><circle cx="10" cy="10" r="8.8" fill="none" stroke="#6a6a6a" stroke-width="1.4" stroke-width="1.3"/><path d="M7.5 5.5L13.5 10L7.5 14.5Z" fill="none" stroke="#6a6a6a" stroke-width="1.4" stroke-width="1.3"/></svg>
<svg style="left:1578px;top:951px" width="20" height="20"><circle cx="10" cy="10" r="8.5" fill="none" stroke="#f0f0f0" stroke-width="1.8"/><path d="M10 1.5A8.5 8.5 0 0 0 10 18.5Z" fill="#f0f0f0"/></svg>
<div class="t" style="left:1617px;top:952.8px;font-size:17px;color:#ececec;">42.00 x 30.00 in</div>
<div class="t" style="left:1760px;top:952.8px;font-size:16.9px;color:#ececec;">3.75 in = 30'-0"</div>
<div class="t" style="left:1px;top:994.1px;font-size:14.5px;color:#e6e6e6;">Ready</div>
<div class="a" style="left:1318px;top:982px;width:37px;height:36px;background:#1b5a8c;"></div>
<div class="a" style="left:1427px;top:982px;width:37px;height:36px;background:#1b5a8c;"></div>
<svg style="left:0;top:0" width="1919" height="1018"><path d="M1256 998H1274 M1256 1004H1274 M1260 993V1010 M1269 993V1010" fill="none" stroke="#f0f0f0" stroke-width="1.3"/><path d="M1291 998H1303 M1291 1004H1299 M1295 993V1010 M1303 993V999" fill="none" stroke="#f0f0f0" stroke-width="1.3"/><path d="M1301 1003Q1306 1000 1310 1004Q1311 1010 1302 1009" fill="none" stroke="#f0f0f0" stroke-width="1.3" stroke-width="1.6"/><path d="M1340 1010H1331V993H1340L1344 997V1000 M1340 993V997H1344" fill="none" stroke="#f0f0f0" stroke-width="1.3"/><path d="M1337 1003Q1341 1000 1345 1003Q1347 1010 1338 1009" fill="none" stroke="#f0f0f0" stroke-width="1.3" stroke-width="1.6"/><path d="M1365 1008L1370 997L1374 995L1377 999L1372 1006Z M1366 1010L1369 1006" fill="none" stroke="#f0f0f0" stroke-width="1.3"/><path d="M1372 1004Q1377 1001 1381 1004Q1383 1010 1374 1009" fill="none" stroke="#f0f0f0" stroke-width="1.3" stroke-width="1.6"/><path d="M1400 1008L1405 997L1409 995L1412 999L1407 1006Z M1401 1010L1404 1006" fill="none" stroke="#f0f0f0" stroke-width="1.3"/><path d="M1410 1003A5 5 0 1 0 1419 1005" fill="none" stroke="#4aa0e0" stroke-width="1.6"/><rect x="1436" y="994" width="20" height="16" fill="none" stroke="#f0f0f0" stroke-width="1.3"/><path d="M1440 999H1452 M1449 996.5L1452 999L1449 1001.5 M1452 1005H1440 M1443 1002.5L1440 1005L1443 1007.5" fill="none" stroke="#f0f0f0" stroke-width="1.3"/><path d="M1467 1000L1471 1004L1475 1000" fill="none" stroke="#f0f0f0" stroke-width="1.3"/></svg>
<div class="t" style="left:1509px;top:995.1px;font-size:14.6px;color:#e6e6e6;">3.75 in = 30'-0"</div>
<div class="t" style="left:1637px;top:995.1px;font-size:14.6px;color:#e6e6e6;">42.00 x 30.00 in</div>
<div class="t" style="left:1798px;top:995.1px;font-size:14.6px;color:#e6e6e6;">(-5.72, 16.65)</div>
</body></html>
